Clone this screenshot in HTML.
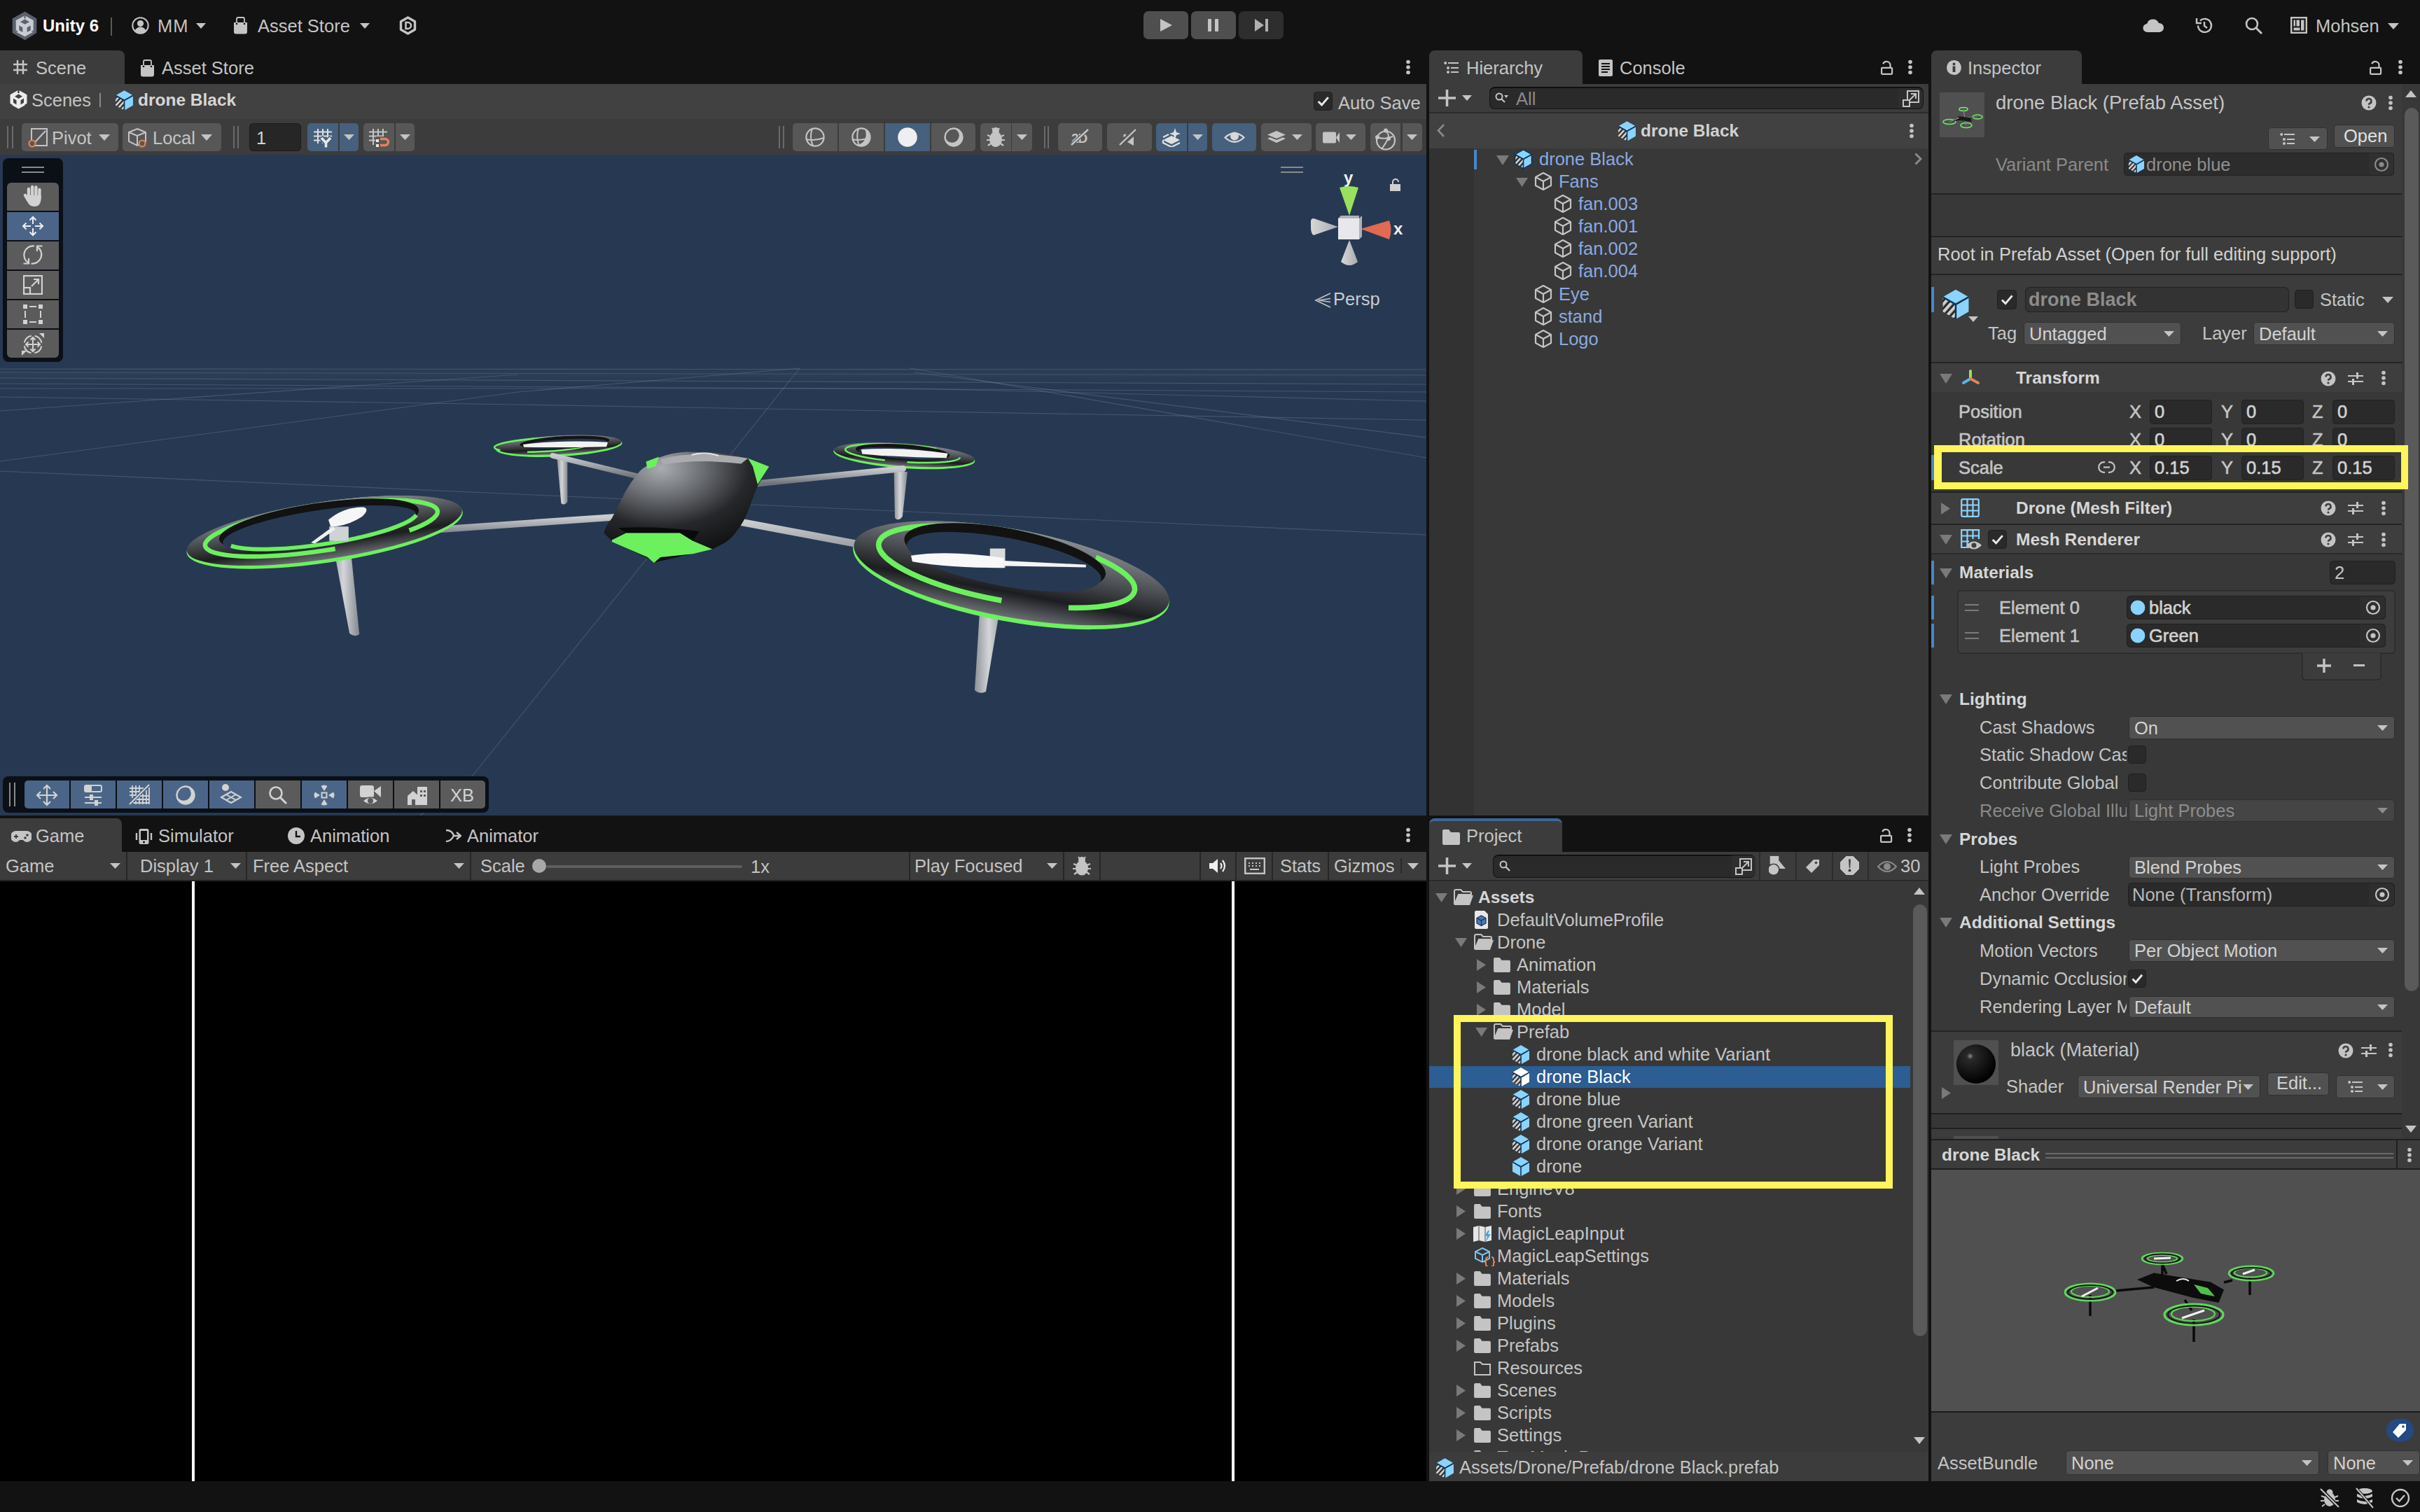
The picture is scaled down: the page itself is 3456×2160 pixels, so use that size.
<!DOCTYPE html><html><head><meta charset="utf-8"><style>
html,body{margin:0;padding:0;width:3456px;height:2160px;overflow:hidden;background:#121212;}
body{position:relative;font-family:"Liberation Sans",sans-serif;}
div,svg{position:absolute;box-sizing:border-box;}
.t{white-space:nowrap;line-height:40px;height:40px;}
</style></head><body>
<div style="left:0px;top:0px;width:3456px;height:72px;background:#121212;"></div>
<div style="left:0px;top:72px;width:178px;height:48px;background:#3c3c3c;border-radius:0 8px 0 0;"></div>
<div style="left:0px;top:120px;width:2037px;height:50px;background:#414141;"></div>
<div style="left:0px;top:170px;width:2037px;height:51px;background:#3c3c3c;"></div>
<div style="left:0px;top:213px;width:2037px;height:3px;background:#3e3a3e;"></div>
<div style="left:0px;top:221px;width:2037px;height:944px;background:#273952;"></div>
<div style="left:0px;top:1169px;width:174px;height:48px;background:#3c3c3c;border-radius:0 8px 0 0;"></div>
<div style="left:0px;top:1217px;width:2037px;height:40px;background:#3c3c3c;"></div>
<div style="left:0px;top:1257px;width:2037px;height:2px;background:#232323;"></div>
<div style="left:0px;top:1259px;width:2037px;height:857px;background:#000;"></div>
<div style="left:274px;top:1259px;width:4px;height:857px;background:#fff;"></div>
<div style="left:1759px;top:1259px;width:4px;height:857px;background:#fff;"></div>
<div style="left:2041px;top:72px;width:219px;height:48px;background:#3c3c3c;border-radius:8px 8px 0 0;"></div>
<div style="left:2041px;top:120px;width:713px;height:40px;background:#3c3c3c;"></div>
<div style="left:2041px;top:160px;width:713px;height:2px;background:#2a2a2a;"></div>
<div style="left:2041px;top:162px;width:713px;height:50px;background:#414141;"></div>
<div style="left:2041px;top:212px;width:713px;height:953px;background:#383838;"></div>
<div style="left:2041px;top:212px;width:64px;height:953px;background:#323232;"></div>
<div style="left:2041px;top:1169px;width:190px;height:48px;background:#3c3c3c;border-radius:8px 8px 0 0;border-top:4px solid #3d6696;"></div>
<div style="left:2041px;top:1217px;width:713px;height:40px;background:#3c3c3c;"></div>
<div style="left:2041px;top:1257px;width:713px;height:2px;background:#2a2a2a;"></div>
<div style="left:2041px;top:1259px;width:713px;height:815px;background:#383838;"></div>
<div style="left:2041px;top:2074px;width:713px;height:42px;background:#3c3c3c;"></div>
<div style="left:2758px;top:72px;width:215px;height:48px;background:#3c3c3c;border-radius:8px 8px 0 0;"></div>
<div style="left:2758px;top:120px;width:698px;height:1509px;background:#3c3c3c;"></div>
<div style="left:2758px;top:1629px;width:698px;height:42px;background:#3c3c3c;"></div>
<div style="left:2758px;top:1671px;width:698px;height:345px;background:#505050;"></div>
<div style="left:2758px;top:2016px;width:698px;height:2px;background:#1a1a1a;"></div>
<div style="left:2758px;top:2018px;width:698px;height:98px;background:#3c3c3c;"></div>
<div style="left:3430px;top:120px;width:26px;height:1509px;background:#383838;"></div>
<svg style="left:3435px;top:129px;" width="16" height="10" viewBox="0 0 16 10"><path d="M0 10H16L8 0Z" fill="#c4c4c4"/></svg>
<div style="left:3434px;top:154px;width:20px;height:1262px;background:#5a5a5a;border-radius:10px;"></div>
<svg style="left:3435px;top:1608px;" width="16" height="10" viewBox="0 0 16 10"><path d="M0 0H16L8 10Z" fill="#c4c4c4"/></svg>
<svg style="left:17px;top:16px;" width="36" height="42" viewBox="0 0 36 42"><path d="M18.5 0.4L35.3 10.5V31L18.5 41.3L0.7 31V10.5Z" fill="#5a616d"/>
<path d="M18.5 6.3L30.7 13V29.5L18.5 36.3L5.7 29.5V13Z" fill="#c9ccd2"/>
<path d="M18.5 11.5L25 15.2L18.5 18.8L12 15.2Z" fill="#5a616d"/>
<path d="M10.3 20.4L15.3 23.2V30L10.3 27.2Z" fill="#5a616d"/>
<path d="M26.7 20.4L21.7 23.2V30L26.7 27.2Z" fill="#5a616d"/>
<path d="M17.5 6.3H19.5V10.5H17.5Z M5.7 27L9 29L5.7 30Z M30.7 27L27.5 29L30.7 30Z" fill="#5a616d"/></svg>
<div class="t" style="left:61px;top:17px;font-size:24px;color:#ffffff;font-weight:bold;">Unity 6</div>
<div style="left:158px;top:25px;width:2px;height:26px;background:#5a5a5a;"></div>
<svg style="left:188px;top:24px;" width="25" height="25" viewBox="0 0 25 25"><circle cx="12.5" cy="12.5" r="11.2" stroke="#c4c4c4" stroke-width="2" fill="none"/><circle cx="12.5" cy="9.5" r="4.6" fill="#c4c4c4"/><path d="M4.5 20Q7 14.5 12.5 14.5Q18 14.5 20.5 20Q17 23.5 12.5 23.5Q8 23.5 4.5 20Z" fill="#c4c4c4"/></svg>
<div class="t" style="left:225px;top:17px;font-size:25.5px;color:#c4c4c4;letter-spacing:1px;">MM</div>
<svg style="left:280px;top:33px;" width="14" height="8" viewBox="0 0 14 8"><path d="M0 0H14L7.0 8Z" fill="#c4c4c4"/></svg>
<svg style="left:333px;top:24px;" width="21" height="25" viewBox="0 0 21 25"><path d="M5 9V3Q5 1 7 1H14Q16 1 16 3V9" stroke="#c4c4c4" stroke-width="1.8" fill="none"/><path d="M1 8.5Q1 8 1.5 8H19.5Q20 8 20 8.5V21.5Q20 24.5 17 24.5H4Q1 24.5 1 21.5Z" fill="#c4c4c4"/><circle cx="5" cy="10" r="1.3" fill="#121212"/><circle cx="16" cy="10" r="1.3" fill="#121212"/></svg>
<div class="t" style="left:368px;top:17px;font-size:25.5px;color:#c4c4c4;">Asset Store</div>
<svg style="left:514px;top:33px;" width="14" height="8" viewBox="0 0 14 8"><path d="M0 0H14L7.0 8Z" fill="#c4c4c4"/></svg>
<svg style="left:570px;top:23px;" width="25" height="27" viewBox="0 0 25 27"><path d="M12.5 2L22.5 7.8V19.2L12.5 25L2.5 19.2V7.8Z" stroke="#c4c4c4" stroke-width="3.4" fill="none" stroke-linejoin="round"/><path d="M9.5 9H12.5A4.5 4.5 0 0 1 12.5 18H9.5Z" stroke="#c4c4c4" stroke-width="2.6" fill="none"/></svg>
<div style="left:1633px;top:16px;width:64px;height:40px;background:#4f4f4f;border-radius:7px;"></div>
<div style="left:1701px;top:16px;width:64px;height:40px;background:#4f4f4f;border-radius:7px;"></div>
<div style="left:1769px;top:16px;width:64px;height:40px;background:#2e2e2e;border-radius:7px;"></div>
<svg style="left:1656px;top:26px;" width="19" height="20" viewBox="0 0 19 20"><path d="M1 1V19L18 10Z" fill="#c4c4c4"/></svg>
<svg style="left:1725px;top:26px;" width="16" height="20" viewBox="0 0 16 20"><rect x="0" y="1" width="5" height="18" rx="1" fill="#c4c4c4"/><rect x="10" y="1" width="5" height="18" rx="1" fill="#c4c4c4"/></svg>
<svg style="left:1791px;top:26px;" width="22" height="20" viewBox="0 0 22 20"><path d="M1 1V19L14 10Z" fill="#b0b0b0"/><rect x="16" y="1" width="4" height="18" fill="#b0b0b0"/></svg>
<svg style="left:3060px;top:25px;" width="30" height="22" viewBox="0 0 30 22"><path d="M7 21A6 6 0 0 1 6 9A9 9 0 0 1 23 8A6.5 6.5 0 0 1 24 21Z" fill="#c4c4c4"/></svg>
<svg style="left:3134px;top:24px;" width="27" height="25" viewBox="0 0 27 25"><path d="M5 12.5A9.5 9.5 0 1 0 8 5.5" stroke="#c4c4c4" stroke-width="2.4" fill="none"/><path d="M3 2V9H10" stroke="#c4c4c4" stroke-width="2.4" fill="none"/><path d="M14 7V13L18 16" stroke="#c4c4c4" stroke-width="2.4" fill="none"/></svg>
<svg style="left:3206px;top:24px;" width="26" height="26" viewBox="0 0 26 26"><circle cx="10" cy="10" r="8" stroke="#c4c4c4" stroke-width="2.6" fill="none"/><path d="M16 16L24 24" stroke="#c4c4c4" stroke-width="3"/></svg>
<svg style="left:3271px;top:24px;" width="24" height="24" viewBox="0 0 24 24"><rect x="1.2" y="1.2" width="21.6" height="21.6" stroke="#c4c4c4" stroke-width="2.4" fill="none"/><rect x="4.5" y="4.5" width="2.5" height="9" fill="#c4c4c4"/><rect x="8.5" y="4.5" width="4.5" height="9" fill="#c4c4c4"/><rect x="15" y="4.5" width="4.5" height="15" fill="#c4c4c4"/><rect x="4.5" y="15.5" width="9" height="4" fill="#c4c4c4"/></svg>
<div class="t" style="left:3307px;top:17px;font-size:25.5px;color:#c4c4c4;">Mohsen</div>
<svg style="left:3410px;top:33px;" width="16" height="9" viewBox="0 0 16 9"><path d="M0 0H16L8.0 9Z" fill="#c4c4c4"/></svg>
<svg style="left:18px;top:85px;" width="22" height="22" viewBox="0 0 22 22"><path d="M7 1V21M15 1V21M1 7H21M1 15H21" stroke="#c4c4c4" stroke-width="2.4"/></svg>
<div class="t" style="left:51px;top:77px;font-size:25.5px;color:#c4c4c4;">Scene</div>
<svg style="left:200px;top:85px;" width="21" height="25" viewBox="0 0 21 25"><path d="M5 9V3Q5 1 7 1H14Q16 1 16 3V9" stroke="#c4c4c4" stroke-width="1.8" fill="none"/><path d="M1 8.5Q1 8 1.5 8H19.5Q20 8 20 8.5V21.5Q20 24.5 17 24.5H4Q1 24.5 1 21.5Z" fill="#c4c4c4"/><circle cx="5" cy="10" r="1.3" fill="#121212"/><circle cx="16" cy="10" r="1.3" fill="#121212"/></svg>
<div class="t" style="left:231px;top:77px;font-size:25.5px;color:#c4c4c4;">Asset Store</div>
<svg style="left:2007px;top:84px;" width="8" height="24" viewBox="0 0 8 24"><circle cx="4" cy="4.5" r="2.8" fill="#c4c4c4"/><circle cx="4" cy="12" r="2.8" fill="#c4c4c4"/><circle cx="4" cy="19.5" r="2.8" fill="#c4c4c4"/></svg>
<svg style="left:14px;top:128px;" width="25" height="28" viewBox="0 0 25 28"><path d="M12.5 0.5L24.5 7.2V20.8L12.5 27.5L0.5 20.8V7.2Z" fill="#ececec"/>
<path d="M12.5 6.5L18 9.8L12.5 13L7 9.8Z" fill="#414141"/>
<path d="M5 12.5L9.5 15.2V21.5L5 18.8Z" fill="#414141"/>
<path d="M20 12.5L15.5 15.2V21.5L20 18.8Z" fill="#414141"/>
<path d="M11.3 0V5H13.7V0Z M0 19.5L4.2 22L0 23Z M25 19.5L20.8 22L25 23Z" fill="#414141"/></svg>
<div class="t" style="left:45px;top:123px;font-size:25.5px;color:#c4c4c4;">Scenes</div>
<div style="left:142px;top:133px;width:2px;height:20px;background:#8a8a8a;"></div>
<svg style="left:164px;top:128px;" width="27" height="29.7" viewBox="0 0 26 26" preserveAspectRatio="none"><defs><pattern id="st164_129" width="4.6" height="6" patternUnits="userSpaceOnUse" patternTransform="rotate(45)"><rect width="2.7" height="6" fill="#d0d0d0"/><rect x="2.7" width="1.9" height="6" fill="#2a2a2a"/></pattern></defs>
<path d="M13 1L25 7.3L13 13.5L1 7.3Z" fill="#8ad3ff"/><path d="M25 7.3V19.7L13 26V13.5Z" fill="#8ad3ff"/><path d="M1 7.3L13 13.5V26L1 19.7Z" fill="url(#st164_129)"/><path d="M13 13.5V26M1 7.3L13 13.5L25 7.3" stroke="#0d3556" stroke-width="1.6" fill="none" stroke-linejoin="round"/></svg>
<div class="t" style="left:197px;top:123px;font-size:24.5px;color:#d6d6d6;font-weight:bold;">drone Black</div>
<svg style="left:1876px;top:131px;" width="27" height="27" viewBox="0 0 27 27"><rect x="0.5" y="0.5" width="26" height="26" rx="4" fill="#2a2a2a" stroke="#1f1f1f"/><path d="M6.75 14.040000000000001L11.61 18.9L20.79 8.1" stroke="#e8e8e8" stroke-width="3" fill="none"/></svg>
<div class="t" style="left:1911px;top:127px;font-size:25.5px;color:#c4c4c4;">Auto Save</div>
<div style="left:10px;top:180px;width:2px;height:32px;background:#6a6a6a;"></div>
<div style="left:17px;top:180px;width:2px;height:32px;background:#6a6a6a;"></div>
<div style="left:31px;top:176px;width:138px;height:40px;background:#575757;border-radius:5px;"></div>
<svg style="left:39px;top:182px;" width="30" height="30" viewBox="0 0 30 30"><rect x="6" y="2" width="22" height="24" stroke="#c4c4c4" stroke-width="2" fill="none"/><path d="M11 21L26 5" stroke="#c4c4c4" stroke-width="2"/><circle cx="7" cy="23" r="4.5" fill="#575757" stroke="#e8805a" stroke-width="2.2"/></svg>
<div class="t" style="left:74px;top:177px;font-size:25.5px;color:#c4c4c4;">Pivot</div>
<svg style="left:141px;top:192px;" width="16" height="9" viewBox="0 0 16 9"><path d="M0 0H16L8.0 9Z" fill="#c4c4c4"/></svg>
<div style="left:175px;top:176px;width:141px;height:40px;background:#575757;border-radius:5px;"></div>
<svg style="left:182px;top:182px;" width="30" height="30" viewBox="0 0 30 30"><path d="M14 2L26 7V20L14 26L2 20V7Z M2 7L14 12L26 7 M14 12V26" stroke="#c4c4c4" stroke-width="2" fill="none"/><circle cx="21" cy="23" r="4.5" fill="#575757" stroke="#e8805a" stroke-width="2.2"/></svg>
<div class="t" style="left:218px;top:177px;font-size:25.5px;color:#c4c4c4;">Local</div>
<svg style="left:287px;top:192px;" width="16" height="9" viewBox="0 0 16 9"><path d="M0 0H16L8.0 9Z" fill="#c4c4c4"/></svg>
<div style="left:333px;top:180px;width:2px;height:32px;background:#6a6a6a;"></div>
<div style="left:339px;top:180px;width:2px;height:32px;background:#6a6a6a;"></div>
<div style="left:356px;top:176px;width:74px;height:40px;background:#262626;border-radius:6px;box-shadow:inset 0 0 0 1px #1c1c1c;"></div>
<div class="t" style="left:366px;top:177px;font-size:25.5px;color:#d2d2d2;">1</div>
<div style="left:439px;top:176px;width:44px;height:40px;background:#46607e;border-radius:5px 0 0 5px;"></div>
<div style="left:485px;top:176px;width:27px;height:40px;background:#46607e;border-radius:0 5px 5px 0;"></div>
<svg style="left:447px;top:183px;" width="30" height="28" viewBox="0 0 30 28"><path d="M7 1V22M14 1V22M21 1V14M1 5.5H27M1 11.5H27M1 17.5H12" stroke="#e0e0e0" stroke-width="2"/><path d="M11 13L18.5 21L26 13M18.5 21V28" stroke="#46607e" stroke-width="7" fill="none"/><path d="M12 14L18.5 21L25 14M18.5 21V27.5" stroke="#e8e8e8" stroke-width="3.6" fill="none"/></svg>
<svg style="left:491px;top:192px;" width="15" height="8" viewBox="0 0 15 8"><path d="M0 0H15L7.5 8Z" fill="#c4c4c4"/></svg>
<div style="left:519px;top:176px;width:44px;height:40px;background:#575757;border-radius:5px 0 0 5px;"></div>
<div style="left:565px;top:176px;width:27px;height:40px;background:#575757;border-radius:0 5px 5px 0;"></div>
<svg style="left:526px;top:183px;" width="32" height="28" viewBox="0 0 32 28"><path d="M7 1V24M14 1V17M21 1V12M1 5.5H27M1 11.5H20M1 17.5H10" stroke="#c4c4c4" stroke-width="2"/><rect x="11" y="12" width="20" height="16" fill="#575757"/><path d="M17 15.5H24A4.5 4.5 0 0 1 24 24.5H17" stroke="#e8805a" stroke-width="3.4" fill="none"/><rect x="11" y="16" width="4" height="4" fill="#e8e8e8"/><rect x="11" y="23" width="4" height="4" fill="#e8e8e8"/></svg>
<svg style="left:571px;top:192px;" width="15" height="8" viewBox="0 0 15 8"><path d="M0 0H15L7.5 8Z" fill="#c4c4c4"/></svg>
<div style="left:1112px;top:180px;width:2px;height:32px;background:#6a6a6a;"></div>
<div style="left:1118px;top:180px;width:2px;height:32px;background:#6a6a6a;"></div>
<div style="left:1132px;top:176px;width:64px;height:40px;background:#575757;border-radius:5px 0 0 5px;"></div>
<div style="left:1198px;top:176px;width:64px;height:40px;background:#575757;border-radius:0;"></div>
<div style="left:1264px;top:176px;width:64px;height:40px;background:#46607e;border-radius:0;"></div>
<div style="left:1330px;top:176px;width:63px;height:40px;background:#575757;border-radius:0 5px 5px 0;"></div>
<svg style="left:1150px;top:182px;" width="28" height="28" viewBox="0 0 28 28"><circle cx="14" cy="14" r="12.6" stroke="#c4c4c4" stroke-width="2.2" fill="none"/><path d="M10 1.5Q5.5 14 11 26.5M1.5 17Q14 19.5 26.5 15" stroke="#c4c4c4" stroke-width="2" fill="none"/></svg>
<svg style="left:1216px;top:182px;" width="28" height="28" viewBox="0 0 28 28"><circle cx="14" cy="14" r="12.6" stroke="#c4c4c4" stroke-width="2.2" fill="none"/><path d="M10 1.5Q6 14 11 26.5M1.5 17Q10 19 20 16.5" stroke="#c4c4c4" stroke-width="2" fill="none"/><path d="M19 2.5A12.6 12.6 0 0 1 7 25Q17 24 20 15Q22 8 19 2.5Z" fill="#c4c4c4"/></svg>
<svg style="left:1281px;top:181px;" width="30" height="30" viewBox="0 0 30 30"><circle cx="15" cy="15" r="13.8" fill="#efefef"/></svg>
<svg style="left:1348px;top:182px;" width="28" height="28" viewBox="0 0 28 28"><circle cx="14" cy="14" r="13.4" fill="#c4c4c4"/><circle cx="11.6" cy="11.6" r="10.2" fill="#575757"/><circle cx="14" cy="14" r="12.3" stroke="#c4c4c4" stroke-width="2.2" fill="none"/></svg>
<div style="left:1400px;top:176px;width:44px;height:40px;background:#575757;border-radius:5px 0 0 5px;"></div>
<div style="left:1445px;top:176px;width:29px;height:40px;background:#575757;border-radius:0 5px 5px 0;"></div>
<svg style="left:1408px;top:181px;" width="28" height="30" viewBox="0 0 28 30"><ellipse cx="14" cy="18" rx="9" ry="11" fill="#c4c4c4"/><circle cx="14" cy="6" r="5" fill="#c4c4c4"/><path d="M2 12L7 14M26 12L21 14M1 19H6M27 19H22M3 27L7 24M25 27L21 24M9 2L11 5M19 2L17 5" stroke="#c4c4c4" stroke-width="2.2"/></svg>
<svg style="left:1452px;top:192px;" width="15" height="8" viewBox="0 0 15 8"><path d="M0 0H15L7.5 8Z" fill="#c4c4c4"/></svg>
<div style="left:1491px;top:180px;width:2px;height:32px;background:#6a6a6a;"></div>
<div style="left:1496px;top:180px;width:2px;height:32px;background:#6a6a6a;"></div>
<div style="left:1511px;top:176px;width:63px;height:40px;background:#575757;border-radius:5px;"></div>
<svg style="left:1528px;top:183px;" width="30" height="26" viewBox="0 0 30 26"><text x="2" y="20.5" font-family="Liberation Sans" font-weight="bold" font-size="19" fill="#c4c4c4" letter-spacing="-1">2D</text><path d="M2 24L26 2" stroke="#575757" stroke-width="5"/><path d="M2 24L26 2" stroke="#c4c4c4" stroke-width="2.4"/></svg>
<div style="left:1581px;top:176px;width:64px;height:40px;background:#575757;border-radius:5px;"></div>
<svg style="left:1598px;top:183px;" width="28" height="26" viewBox="0 0 28 26"><path d="M12 20L21 12V25Z" fill="#c4c4c4"/><path d="M6 12L10 9M7 9L9 12" stroke="#c4c4c4" stroke-width="1.6"/><path d="M1 24L24 2" stroke="#575757" stroke-width="5"/><path d="M1 24L24 2" stroke="#c4c4c4" stroke-width="2.4"/></svg>
<div style="left:1651px;top:176px;width:44px;height:40px;background:#46607e;border-radius:5px 0 0 5px;"></div>
<div style="left:1697px;top:176px;width:27px;height:40px;background:#46607e;border-radius:0 5px 5px 0;"></div>
<svg style="left:1659px;top:182px;" width="28" height="28" viewBox="0 0 28 28"><path d="M2 18L14 24L26 18L14 12Z" fill="#e0e0e0"/><path d="M2 14L10 10M2 18V22L14 28L26 22" stroke="#e0e0e0" stroke-width="2.2" fill="none"/><path d="M19 1L21 7L27 9L21 11L19 17L17 11L11 9L17 7Z" fill="#e0e0e0"/></svg>
<svg style="left:1703px;top:192px;" width="15" height="8" viewBox="0 0 15 8"><path d="M0 0H15L7.5 8Z" fill="#c4c4c4"/></svg>
<div style="left:1731px;top:176px;width:63px;height:40px;background:#46607e;border-radius:5px;"></div>
<svg style="left:1748px;top:187px;" width="30" height="18" viewBox="0 0 30 18"><path d="M1.5 9.5Q15 -3 28.5 9.5Q15 22 1.5 9.5Z" stroke="#d8d8d8" stroke-width="2.2" fill="none"/><circle cx="15" cy="7.5" r="6" fill="#d8d8d8"/></svg>
<div style="left:1801px;top:176px;width:72px;height:40px;background:#575757;border-radius:5px;"></div>
<svg style="left:1810px;top:187px;" width="26" height="18" viewBox="0 0 26 18"><path d="M13 0L26 5.5L13 11L0 5.5Z" fill="#c4c4c4"/><path d="M0 11L4 9.3L13 13L22 9.3L26 11L13 17Z" fill="#c4c4c4"/></svg>
<svg style="left:1845px;top:192px;" width="15" height="8" viewBox="0 0 15 8"><path d="M0 0H15L7.5 8Z" fill="#c4c4c4"/></svg>
<div style="left:1879px;top:176px;width:71px;height:40px;background:#575757;border-radius:5px;"></div>
<svg style="left:1889px;top:188px;" width="25" height="17" viewBox="0 0 25 17"><rect x="0" y="0.5" width="19" height="16" rx="2" fill="#c4c4c4"/><path d="M19 8.5L24 1V16Z" fill="#c4c4c4"/></svg>
<svg style="left:1922px;top:192px;" width="15" height="8" viewBox="0 0 15 8"><path d="M0 0H15L7.5 8Z" fill="#c4c4c4"/></svg>
<div style="left:1957px;top:176px;width:43px;height:40px;background:#575757;border-radius:5px 0 0 5px;"></div>
<div style="left:2003px;top:176px;width:28px;height:40px;background:#575757;border-radius:0 5px 5px 0;"></div>
<svg style="left:1963px;top:183px;" width="32" height="32" viewBox="0 0 32 32"><circle cx="16" cy="17.5" r="13" stroke="#c4c4c4" stroke-width="2.2" fill="none"/><path d="M16 3Q21 10 20 14M4 13Q12 16 20 14L26 12M20 14Q16 22 10 30" stroke="#c4c4c4" stroke-width="2" fill="none"/><circle cx="16" cy="3.5" r="3" fill="#c4c4c4"/><circle cx="4" cy="13" r="3" fill="#c4c4c4"/><circle cx="20" cy="15" r="3" fill="#c4c4c4"/></svg>
<svg style="left:2009px;top:192px;" width="15" height="8" viewBox="0 0 15 8"><path d="M0 0H15L7.5 8Z" fill="#c4c4c4"/></svg>
<svg style="left:0px;top:221px;" width="2037" height="944" viewBox="0 0 2037 944"><line x1="0" y1="438" x2="740" y2="339" stroke="#8593a8" stroke-opacity="0.32" stroke-width="1.1"/><line x1="740" y1="339" x2="1142" y2="305" stroke="#8593a8" stroke-opacity="0.32" stroke-width="1.1"/><line x1="0" y1="452" x2="740" y2="485" stroke="#8593a8" stroke-opacity="0.32" stroke-width="1.1"/><line x1="740" y1="485" x2="1300" y2="510" stroke="#8593a8" stroke-opacity="0.32" stroke-width="1.1"/><line x1="1300" y1="510" x2="2037" y2="543" stroke="#8593a8" stroke-opacity="0.32" stroke-width="1.1"/><line x1="0" y1="366" x2="740" y2="314" stroke="#8593a8" stroke-opacity="0.32" stroke-width="1.1"/><line x1="0" y1="346" x2="740" y2="357" stroke="#8593a8" stroke-opacity="0.32" stroke-width="1.1"/><line x1="740" y1="357" x2="2037" y2="379" stroke="#8593a8" stroke-opacity="0.32" stroke-width="1.1"/><line x1="0" y1="327" x2="2037" y2="339" stroke="#8593a8" stroke-opacity="0.32" stroke-width="1.1"/><line x1="0" y1="319" x2="2037" y2="328" stroke="#8593a8" stroke-opacity="0.32" stroke-width="1.1"/><line x1="0" y1="311" x2="2037" y2="315" stroke="#8593a8" stroke-opacity="0.32" stroke-width="1.1"/><line x1="0" y1="306" x2="2037" y2="307" stroke="#8593a8" stroke-opacity="0.32" stroke-width="1.1"/><line x1="0" y1="334" x2="1300" y2="334" stroke="#8593a8" stroke-opacity="0.32" stroke-width="1.1"/><line x1="1300" y1="334" x2="2037" y2="352" stroke="#8593a8" stroke-opacity="0.32" stroke-width="1.1"/><line x1="1300" y1="305" x2="2037" y2="433" stroke="#8593a8" stroke-opacity="0.32" stroke-width="1.1"/><line x1="675" y1="887" x2="1142" y2="305" stroke="#8593a8" stroke-opacity="0.32" stroke-width="1.1"/><line x1="600" y1="944" x2="675" y2="887" stroke="#8593a8" stroke-opacity="0.32" stroke-width="1.1"/><line x1="1305" y1="311" x2="2037" y2="404" stroke="#8593a8" stroke-opacity="0.32" stroke-width="1.1"/></svg>
<div style="left:0px;top:522px;width:2037px;height:26px;background:linear-gradient(#27395200,#3a4a6040,#27395200);"></div>
<svg style="left:200px;top:560px;" width="1550" height="460" viewBox="0 0 2420 718">
<defs>
<linearGradient id="tube" x1="0" y1="0" x2="0" y2="1"><stop offset="0" stop-color="#8a8e94"/><stop offset="0.4" stop-color="#4e5156"/><stop offset="0.72" stop-color="#1c1d20"/><stop offset="1" stop-color="#6a6d73"/></linearGradient>
<linearGradient id="bodyg" x1="0.2" y1="0" x2="0.5" y2="1"><stop offset="0" stop-color="#a8abb0"/><stop offset="0.22" stop-color="#5f6267"/><stop offset="0.5" stop-color="#2a2b2e"/><stop offset="1" stop-color="#0a0a0a"/></linearGradient>
<linearGradient id="leg" x1="0" y1="0" x2="1" y2="0"><stop offset="0" stop-color="#8d9197"/><stop offset="0.45" stop-color="#d3d5d9"/><stop offset="1" stop-color="#84888e"/></linearGradient>
<linearGradient id="arm" x1="0" y1="0" x2="0" y2="1"><stop offset="0" stop-color="#c9cbcf"/><stop offset="0.5" stop-color="#9da1a7"/><stop offset="1" stop-color="#6f7379"/></linearGradient>
</defs>
<!-- back rings -->
<g transform="rotate(-3 934 118)">
<ellipse cx="934" cy="121" rx="141" ry="23" fill="#6cf05e"/>
<ellipse cx="934" cy="118" rx="140" ry="21" fill="url(#tube)"/>
<ellipse cx="900" cy="116" rx="110" ry="15" fill="none" stroke="#6cf05e" stroke-width="4" stroke-dasharray="150 60 200 400"/>
<ellipse cx="947" cy="113" rx="100" ry="14" fill="#141414"/>
<ellipse cx="947" cy="116" rx="94" ry="10" fill="#273952"/>
</g>
<path d="M854 117Q940 106 1043 112L1040 122Q950 124 856 123Z" fill="#f2f2f2"/>
<g transform="rotate(4 1704 140)">
<ellipse cx="1704" cy="143" rx="158" ry="27" fill="#6cf05e"/>
<ellipse cx="1704" cy="140" rx="157" ry="25" fill="url(#tube)"/>
<ellipse cx="1700" cy="137" rx="128" ry="19" fill="none" stroke="#6cf05e" stroke-width="4" stroke-dasharray="120 50 300 600"/>
<ellipse cx="1700" cy="134" rx="105" ry="17" fill="#141414"/>
<ellipse cx="1700" cy="137" rx="98" ry="12" fill="#273952"/>
</g>
<path d="M1608 128Q1700 122 1801 137L1798 147Q1700 146 1610 138Z" fill="#f2f2f2"/>
<!-- back legs -->
<path d="M930 150L953 150L953 245Q946 254 939 248Z" fill="url(#leg)"/>
<path d="M1681 178L1711 178L1700 278Q1690 290 1683 280Z" fill="url(#leg)"/>
<!-- back arms -->
<path d="M920 142L1118 190" stroke="url(#arm)" stroke-width="12" stroke-linecap="round"/>
<path d="M1377 204L1701 171" stroke="url(#arm)" stroke-width="14" stroke-linecap="round"/>
<!-- front arms -->
<path d="M445 322L1060 279" stroke="url(#arm)" stroke-width="15" stroke-linecap="round"/>
<path d="M1339 290L1900 395" stroke="url(#arm)" stroke-width="16" stroke-linecap="round"/>
<!-- body -->
<defs><radialGradient id="bodyr" cx="0.35" cy="0.15" r="0.85"><stop offset="0" stop-color="#a9acb1"/><stop offset="0.3" stop-color="#6b6e73"/><stop offset="0.62" stop-color="#26272a"/><stop offset="1" stop-color="#0c0c0c"/></radialGradient></defs>
<path d="M1034 314Q1040 295 1052 281.6L1074 238.2Q1088 210 1102.5 191.2Q1115 172 1128 166Q1140 152 1153 147.8Q1185 135 1218 133.4L1283 135.2Q1330 140 1355 147.8L1402 166L1377 209.4Q1365 240 1355 267.2Q1345 292 1330 310.6Q1315 332 1297.7 339.4L1276 350.4L1149.6 379.3L1052 332.4Z" fill="url(#bodyr)"/>
<path d="M1052 330.3L1084.5 314.1L1203.8 314.1L1232.7 332.2L1276 350.4L1232.7 361.1L1160.4 368.3L1146 381L1131.5 368.3L1052 334Z" fill="#6cf05e"/>
<path d="M1066 303Q1150 298 1247 310.6L1232.7 332.2L1203.8 314.1L1084.5 314.1Z" fill="#0a0a0a"/>
<path d="M1128 155.2L1157 144.3L1149.6 166L1131.5 171.4Z" fill="#6cf05e"/>
<path d="M1355.5 147.8L1402.5 166L1377.1 205.8L1366.3 166Z" fill="#6cf05e"/>
<path d="M1160 150Q1240 128 1355.5 147.8L1340 160Q1250 148 1165 162Z" fill="#a9abae"/>
<path d="M1230 140Q1260 132 1290 142" stroke="#e8e8e8" stroke-width="3" fill="none"/>
<!-- left front ring -->
<path d="M424 306L465 306L489 540Q478 548 467 538Z" fill="url(#leg)"/>
<g transform="rotate(-8.5 411 309)">
<ellipse cx="411" cy="313" rx="311" ry="68" fill="#6cf05e"/>
<ellipse cx="411" cy="309" rx="310" ry="64" fill="url(#tube)"/>
<ellipse cx="405" cy="303" rx="262" ry="50" fill="none" stroke="#6cf05e" stroke-width="10" stroke-dasharray="80 170 520 90 700 2000"/>
<ellipse cx="401" cy="294" rx="225" ry="48" fill="#121212"/>
<ellipse cx="401" cy="303" rx="218" ry="41" fill="#273952"/>
<path d="M200 312A218 41 0 0 0 619 305" stroke="#6cf05e" stroke-width="9" fill="none"/>
</g>
<path d="M422 300L465 300L465 332L422 332Z" fill="#d0d2d6"/>
<path d="M420 285Q455 255 500 257Q512 262 495 278Q460 300 425 300Z" fill="#f6f6f6"/>
<path d="M381 336L430 300L436 306L390 338Z" fill="#f0f0f0"/>
<!-- right front ring -->
<path d="M1878 395L1932 395L1886 668Q1872 675 1861 665Z" fill="url(#leg)"/>
<g transform="rotate(10.5 1943 404)">
<ellipse cx="1943" cy="409" rx="358" ry="103" fill="#6cf05e"/>
<ellipse cx="1943" cy="404" rx="357" ry="98" fill="url(#tube)"/>
<ellipse cx="1930" cy="392" rx="290" ry="76" fill="none" stroke="#6cf05e" stroke-width="12" stroke-dasharray="160 150 700 120 900 3000"/>
<ellipse cx="1922" cy="370" rx="228" ry="63" fill="#121212"/>
<ellipse cx="1922" cy="382" rx="220" ry="54" fill="#273952"/>
</g>
<path d="M1895 349L1929 349L1929 392L1895 392Z" fill="#d8dade"/>
<path d="M1719 365Q1800 352 1926 370L1926 392Q1800 392 1722 378Z" fill="#f8f8f8"/>
<path d="M1926 376L2109 385L2109 391L1926 388Z" fill="#f4f4f4"/>
</svg>
<div style="left:4px;top:226px;width:86px;height:291px;background:#0b0f16;border-radius:8px;"></div>
<div style="left:31px;top:238px;width:32px;height:2px;background:#8a8a8a;"></div>
<div style="left:31px;top:245px;width:32px;height:2px;background:#8a8a8a;"></div>
<div style="left:10px;top:261px;width:74px;height:40px;background:#5b5b5b;border-radius:6px 6px 0 0;"></div>
<div style="left:10px;top:303px;width:74px;height:40px;background:#4b6588;border-radius:0;"></div>
<div style="left:10px;top:345px;width:74px;height:40px;background:#5b5b5b;border-radius:0;"></div>
<div style="left:10px;top:387px;width:74px;height:40px;background:#5b5b5b;border-radius:0;"></div>
<div style="left:10px;top:429px;width:74px;height:40px;background:#5b5b5b;border-radius:0;"></div>
<div style="left:10px;top:471px;width:74px;height:40px;background:#5b5b5b;border-radius:0 0 6px 6px;"></div>
<svg style="left:33px;top:264px;" width="28" height="32" viewBox="0 0 28 32"><path d="M8 6V17M13.2 3V16M18.4 3.5V16M23.4 7V18M3 15L7 22" stroke="#d2d2d2" stroke-width="4.4" stroke-linecap="round"/><path d="M5.8 15H25.6V21Q25 31 15.5 31Q9 31 6 24Z" fill="#d2d2d2"/></svg>
<svg style="left:30px;top:307px;" width="34" height="32" viewBox="0 0 34 32"><path d="M17 3V29M3 16H31M12.5 7.5L17 3L21.5 7.5M12.5 24.5L17 29L21.5 24.5M7.5 11.5L3 16L7.5 20.5M26.5 11.5L31 16L26.5 20.5" stroke="#eeeeee" stroke-width="2" fill="none"/><rect x="14" y="13" width="6" height="6" fill="#4b6588"/></svg>
<svg style="left:32px;top:349px;" width="30" height="30" viewBox="0 0 30 30"><path d="M17 2.5A13 13 0 0 0 8.5 26.5M21 3.5A13 13 0 0 1 12.5 27.5" stroke="#d2d2d2" stroke-width="2.2" fill="none"/><path d="M1.5 27.5H9V20M28.5 2.5H21V10" stroke="#d2d2d2" stroke-width="2.2" fill="none"/></svg>
<svg style="left:33px;top:393px;" width="28" height="28" viewBox="0 0 28 28"><rect x="1" y="1" width="26" height="26" stroke="#d2d2d2" stroke-width="2.2" fill="none"/><rect x="1" y="18" width="9" height="9" stroke="#d2d2d2" stroke-width="2.2" fill="none"/><path d="M12 16L22 6M15 6H22V13" stroke="#d2d2d2" stroke-width="2.2" fill="none"/></svg>
<svg style="left:33px;top:435px;" width="28" height="28" viewBox="0 0 28 28"><rect x="0" y="0" width="6" height="6" fill="#d2d2d2"/><rect x="22" y="0" width="6" height="6" fill="#d2d2d2"/><rect x="0" y="22" width="6" height="6" fill="#d2d2d2"/><rect x="22" y="22" width="6" height="6" fill="#d2d2d2"/><path d="M9 3H19M9 25H19M3 9V19M25 9V19" stroke="#d2d2d2" stroke-width="2"/></svg>
<svg style="left:31px;top:476px;" width="32" height="32" viewBox="0 0 32 32"><circle cx="16" cy="16" r="12.5" stroke="#d2d2d2" stroke-width="2" fill="none" stroke-dasharray="14.6 5" stroke-dashoffset="-2.5"/><path d="M16 6V26M6 16H26M12.5 9.5L16 6L19.5 9.5M12.5 22.5L16 26L19.5 22.5M9.5 12.5L6 16L9.5 19.5M22.5 12.5L26 16L22.5 19.5" stroke="#d2d2d2" stroke-width="2" fill="none"/><path d="M25 0H32V7Z M0 32V25H7Z" fill="#d2d2d2"/></svg>
<div style="left:1829px;top:238px;width:32px;height:2px;background:#8a8a8a;"></div>
<div style="left:1829px;top:245px;width:32px;height:2px;background:#8a8a8a;"></div>
<div class="t" style="left:1919px;top:234px;font-size:24px;color:#f0f0f0;font-weight:bold;">y</div>
<svg style="left:1872px;top:262px;" width="140" height="125" viewBox="0 0 140 125">
<defs><linearGradient id="gc" x1="0" x2="1"><stop offset="0" stop-color="#d8d8d8"/><stop offset="1" stop-color="#a8aaae"/></linearGradient></defs>
<path d="M41 6Q54 2 68 6L55 46Z" fill="#9be05c"/>
<path d="M0 62Q-2 50 4 50L39 62L4 74Q0 72 0 62Z" fill="url(#gc)"/>
<path d="M71 65L112 53Q117 66 112 80Z" fill="#e06a52"/>
<rect x="39" y="50" width="30" height="30" fill="#e8e8ec"/><path d="M39 50L43 46H69V50Z M69 50L73 46V76L69 80Z" fill="#b0b2b6"/>
<path d="M55 81L43 112Q55 122 67 112Z" fill="url(#gc)"/>
</svg>
<div class="t" style="left:1990px;top:307px;font-size:24px;color:#f0f0f0;font-weight:bold;">x</div>
<svg style="left:1985px;top:255px;" width="15" height="18" viewBox="0 0 15 18"><path d="M4 8V5A4 4 0 0 1 12 5" stroke="#d0d0d0" stroke-width="2" fill="none"/><rect x="0" y="8" width="15" height="10" fill="#d0d0d0"/></svg>
<svg style="left:1877px;top:417px;" width="26" height="24" viewBox="0 0 26 24"><path d="M23 2L2 12L23 22M23 9.5L6 12L23 14.5" stroke="#c4c4c4" stroke-width="1.6" fill="none"/></svg>
<div class="t" style="left:1904px;top:407px;font-size:25.5px;color:#c9ccd2;">Persp</div>
<div style="left:4px;top:1109px;width:694px;height:52px;background:#0b0f16;border-radius:8px;"></div>
<div style="left:13px;top:1118px;width:2px;height:34px;background:#8a8a8a;"></div>
<div style="left:20px;top:1118px;width:2px;height:34px;background:#8a8a8a;"></div>
<div style="left:35px;top:1115px;width:64px;height:40px;background:#4b6588;border-radius:5px 0 0 5px;"></div>
<div style="left:101px;top:1115px;width:64px;height:40px;background:#4b6588;border-radius:0;"></div>
<div style="left:167px;top:1115px;width:64px;height:40px;background:#4b6588;border-radius:0;"></div>
<div style="left:233px;top:1115px;width:64px;height:40px;background:#4b6588;border-radius:0;"></div>
<div style="left:299px;top:1115px;width:64px;height:40px;background:#4b6588;border-radius:0;"></div>
<div style="left:365px;top:1115px;width:64px;height:40px;background:#5b5b5b;border-radius:0;"></div>
<div style="left:431px;top:1115px;width:64px;height:40px;background:#4b6588;border-radius:0;"></div>
<div style="left:497px;top:1115px;width:64px;height:40px;background:#5b5b5b;border-radius:0;"></div>
<div style="left:563px;top:1115px;width:64px;height:40px;background:#5b5b5b;border-radius:0;"></div>
<div style="left:629px;top:1115px;width:64px;height:40px;background:#5b5b5b;border-radius:0 5px 5px 0;"></div>
<svg style="left:51px;top:1120px;" width="32" height="32" viewBox="0 0 32 32"><path d="M16 2V30M2 16H30M11 7L16 2L21 7M11 25L16 30L21 25M7 11L2 16L7 21M25 11L30 16L25 21" stroke="#d2d2d2" stroke-width="2.2" fill="none"/></svg>
<svg style="left:120px;top:1121px;" width="26" height="30" viewBox="0 0 26 30"><rect x="1" y="1" width="24" height="9" rx="2" stroke="#d2d2d2" stroke-width="2" fill="none"/><rect x="1" y="1" width="10" height="9" rx="2" fill="#d2d2d2"/><path d="M1 18H25M1 26H25" stroke="#d2d2d2" stroke-width="2"/><rect x="8" y="14" width="5" height="8" fill="#d2d2d2"/><rect x="15" y="22" width="5" height="8" fill="#d2d2d2"/></svg>
<svg style="left:184px;top:1120px;" width="30" height="30" viewBox="0 0 30 30"><path d="M5 2V20M10 2V15M15 2V10M1 6H21M1 11H16M1 16H11" stroke="#d2d2d2" stroke-width="1.8"/><path d="M10 29V24M15 29V19M20 29V14M25 29V9M29 29V5M6 27H29M9 22H29M14 17H29" stroke="#d2d2d2" stroke-width="1.8"/><path d="M1 29L29 1" stroke="#4b6588" stroke-width="4"/><path d="M1 29L29 1" stroke="#d2d2d2" stroke-width="2"/></svg>
<svg style="left:250px;top:1121px;" width="30" height="30" viewBox="0 0 30 30"><circle cx="15" cy="15" r="13.5" fill="#d2d2d2"/><circle cx="12.4" cy="12.4" r="10.4" fill="#4b6588"/><circle cx="15" cy="15" r="12.4" stroke="#d2d2d2" stroke-width="2.2" fill="none"/></svg>
<svg style="left:314px;top:1119px;" width="32" height="32" viewBox="0 0 32 32"><circle cx="8" cy="6" r="5" fill="#d2d2d2"/><path d="M2 20L16 12L30 20L16 28Z" stroke="#d2d2d2" stroke-width="2.2" fill="none"/><path d="M9 16L23 24M23 16L9 24" stroke="#d2d2d2" stroke-width="2"/></svg>
<svg style="left:383px;top:1122px;" width="28" height="28" viewBox="0 0 28 28"><circle cx="11" cy="11" r="8.5" stroke="#d2d2d2" stroke-width="2.6" fill="none"/><path d="M17 17L26 26" stroke="#d2d2d2" stroke-width="3"/></svg>
<svg style="left:447px;top:1120px;" width="32" height="32" viewBox="0 0 32 32"><rect x="12.5" y="12.5" width="7" height="7" stroke="#d2d2d2" stroke-width="2" fill="none"/><path d="M16 10L11.5 3Q16 0 20.5 3Z M16 22L11.5 29Q16 32 20.5 29Z M10 16L3 11.5Q0 16 3 20.5Z M22 16L29 11.5Q32 16 29 20.5Z" fill="#d2d2d2"/></svg>
<svg style="left:512px;top:1120px;" width="34" height="32" viewBox="0 0 34 32"><rect x="2" y="2" width="20" height="17" rx="3" fill="#d2d2d2"/><path d="M22 10L32 3V19Z" fill="#d2d2d2"/><path d="M6 24Q17 14 28 24Q17 34 6 24Z" fill="#d2d2d2" stroke="#5b5b5b" stroke-width="1.5"/><circle cx="17" cy="24" r="4" fill="#5b5b5b"/></svg>
<svg style="left:580px;top:1121px;" width="32" height="30" viewBox="0 0 32 30"><path d="M2 29V16L10 9L18 16V29Z" fill="#d2d2d2"/><rect x="16" y="3" width="14" height="26" fill="#d2d2d2"/><rect x="20" y="8" width="3" height="3" fill="#5b5b5b"/><rect x="25" y="8" width="3" height="3" fill="#5b5b5b"/><rect x="20" y="14" width="3" height="3" fill="#5b5b5b"/><rect x="25" y="14" width="3" height="3" fill="#5b5b5b"/><rect x="8" y="21" width="5" height="8" fill="#5b5b5b"/></svg>
<div class="t" style="left:643px;top:1116px;font-size:25.5px;color:#d2d2d2;">XB</div>
<svg style="left:16px;top:1187px;" width="29" height="16" viewBox="0 0 29 16"><path d="M7 0H22A7.5 7.5 0 0 1 22 16Q19 16 17 13H12Q10 16 7 16A7.5 7.5 0 0 1 7 0Z" fill="#c4c4c4"/><path d="M4 8H10M7 5V11" stroke="#3c3c3c" stroke-width="1.8"/><circle cx="20" cy="10" r="1.8" fill="#3c3c3c"/><circle cx="23" cy="6" r="1.8" fill="#3c3c3c"/></svg>
<div class="t" style="left:51px;top:1174px;font-size:25.5px;color:#c4c4c4;">Game</div>
<svg style="left:193px;top:1183px;" width="25" height="24" viewBox="0 0 25 24"><rect x="5.5" y="1" width="14" height="22" rx="2.5" fill="#c4c4c4"/><rect x="8" y="4" width="9" height="13" fill="#121212"/><circle cx="12.5" cy="20" r="1.5" fill="#121212"/><path d="M2 7V17M23 7V17" stroke="#c4c4c4" stroke-width="2.4"/></svg>
<div class="t" style="left:226px;top:1174px;font-size:25.5px;color:#c4c4c4;">Simulator</div>
<svg style="left:411px;top:1182px;" width="24" height="24" viewBox="0 0 24 24"><circle cx="12" cy="12" r="12" fill="#c4c4c4"/><path d="M12 5V13H18" stroke="#121212" stroke-width="2.4" fill="none"/></svg>
<div class="t" style="left:443px;top:1174px;font-size:25.5px;color:#c4c4c4;">Animation</div>
<svg style="left:636px;top:1184px;" width="23" height="20" viewBox="0 0 23 20"><path d="M1 2Q10 2 12 10H22M16 5L22 10L16 15M1 18Q8 18 12 10" stroke="#c4c4c4" stroke-width="2.4" fill="none"/></svg>
<div class="t" style="left:667px;top:1174px;font-size:25.5px;color:#c4c4c4;">Animator</div>
<svg style="left:2007px;top:1181px;" width="8" height="24" viewBox="0 0 8 24"><circle cx="4" cy="4.5" r="2.8" fill="#c4c4c4"/><circle cx="4" cy="12" r="2.8" fill="#c4c4c4"/><circle cx="4" cy="19.5" r="2.8" fill="#c4c4c4"/></svg>
<div style="left:180px;top:1217px;width:2px;height:40px;background:#262626;"></div>
<div style="left:351px;top:1217px;width:2px;height:40px;background:#262626;"></div>
<div style="left:671px;top:1217px;width:2px;height:40px;background:#262626;"></div>
<div style="left:1298px;top:1217px;width:2px;height:40px;background:#262626;"></div>
<div style="left:1518px;top:1217px;width:2px;height:40px;background:#262626;"></div>
<div style="left:1570px;top:1217px;width:2px;height:40px;background:#262626;"></div>
<div style="left:1713px;top:1217px;width:2px;height:40px;background:#262626;"></div>
<div style="left:1764px;top:1217px;width:2px;height:40px;background:#262626;"></div>
<div style="left:1816px;top:1217px;width:2px;height:40px;background:#262626;"></div>
<div style="left:1896px;top:1217px;width:2px;height:40px;background:#262626;"></div>
<div class="t" style="left:8px;top:1217px;font-size:25.5px;color:#c4c4c4;">Game</div>
<svg style="left:157px;top:1233px;" width="15" height="8" viewBox="0 0 15 8"><path d="M0 0H15L7.5 8Z" fill="#c4c4c4"/></svg>
<div class="t" style="left:200px;top:1217px;font-size:25.5px;color:#c4c4c4;">Display 1</div>
<svg style="left:329px;top:1233px;" width="15" height="8" viewBox="0 0 15 8"><path d="M0 0H15L7.5 8Z" fill="#c4c4c4"/></svg>
<div class="t" style="left:361px;top:1217px;font-size:25.5px;color:#c4c4c4;">Free Aspect</div>
<svg style="left:648px;top:1233px;" width="15" height="8" viewBox="0 0 15 8"><path d="M0 0H15L7.5 8Z" fill="#c4c4c4"/></svg>
<div class="t" style="left:686px;top:1217px;font-size:25.5px;color:#c4c4c4;">Scale</div>
<div style="left:780px;top:1236px;width:280px;height:4px;background:#5e5e5e;border-radius:2px;"></div>
<svg style="left:760px;top:1227px;" width="20" height="20" viewBox="0 0 20 20"><circle cx="10" cy="10" r="10" fill="#a8a8a8"/></svg>
<div class="t" style="left:1072px;top:1218px;font-size:25.5px;color:#c4c4c4;">1x</div>
<div class="t" style="left:1306px;top:1217px;font-size:25.5px;color:#c4c4c4;">Play Focused</div>
<svg style="left:1495px;top:1233px;" width="15" height="8" viewBox="0 0 15 8"><path d="M0 0H15L7.5 8Z" fill="#c4c4c4"/></svg>
<svg style="left:1530px;top:1223px;" width="30" height="28" viewBox="0 0 30 28"><ellipse cx="15" cy="17" rx="9" ry="10.5" fill="#c4c4c4"/><circle cx="15" cy="6" r="5" fill="#c4c4c4"/><path d="M3 11L8 13M27 11L22 13M2 18H7M28 18H23M4 26L8 23M26 26L22 23M10 1L12 4M20 1L18 4" stroke="#c4c4c4" stroke-width="2.2"/></svg>
<svg style="left:1726px;top:1226px;" width="26" height="22" viewBox="0 0 26 22"><path d="M1 7H6L13 1V21L6 15H1Z" fill="#eeeeee"/><path d="M17 7Q20 11 17 15M20 3Q26 11 20 19" stroke="#eeeeee" stroke-width="2.2" fill="none"/></svg>
<svg style="left:1777px;top:1225px;" width="30" height="24" viewBox="0 0 30 24"><rect x="1.2" y="1.2" width="27.6" height="21.6" stroke="#c4c4c4" stroke-width="2.4" fill="none"/><path d="M6 8H8M11 8H13M16 8H18M21 8H23M6 12H8M11 12H13M16 12H18M21 12H23M8 17H21" stroke="#c4c4c4" stroke-width="2.2"/></svg>
<div class="t" style="left:1828px;top:1217px;font-size:25.5px;color:#c4c4c4;">Stats</div>
<div class="t" style="left:1905px;top:1217px;font-size:25.5px;color:#c4c4c4;">Gizmos</div>
<div style="left:2000px;top:1226px;width:2px;height:22px;background:#2a2a2a;"></div>
<svg style="left:2010px;top:1233px;" width="16" height="9" viewBox="0 0 16 9"><path d="M0 0H16L8.0 9Z" fill="#c4c4c4"/></svg>
<svg style="left:3312px;top:2125px;" width="30" height="30" viewBox="0 0 30 30"><ellipse cx="15" cy="17" rx="8" ry="10" fill="#c4c4c4"/><circle cx="15" cy="7" r="4.5" fill="#c4c4c4"/><path d="M3 12L8 14M27 12L22 14M2 19H7M28 19H23M4 27L8 24M26 27L22 24" stroke="#c4c4c4" stroke-width="2"/><path d="M2 2L28 28" stroke="#121212" stroke-width="5"/><path d="M2 2L28 28" stroke="#c4c4c4" stroke-width="2.2"/></svg>
<svg style="left:3364px;top:2125px;" width="26" height="30" viewBox="0 0 26 30"><ellipse cx="13" cy="5" rx="11" ry="4" fill="#c4c4c4"/><path d="M2 9Q13 15 24 9V13Q13 19 2 13Z M2 17Q13 23 24 17V21Q13 27 2 21Z" fill="#c4c4c4"/><path d="M1 1L25 29" stroke="#121212" stroke-width="4"/><path d="M1 1L25 29" stroke="#c4c4c4" stroke-width="2"/></svg>
<svg style="left:3414px;top:2126px;" width="28" height="28" viewBox="0 0 28 28"><circle cx="14" cy="14" r="12" stroke="#c4c4c4" stroke-width="2.4" fill="none"/><path d="M8 14L12.5 18.5L20 10" stroke="#c4c4c4" stroke-width="2.4" fill="none"/></svg>
<svg style="left:2062px;top:88px;" width="22" height="17" viewBox="0 0 22 17"><circle cx="2.2" cy="2" r="2" fill="#c4c4c4"/><circle cx="6" cy="9" r="2" fill="#c4c4c4"/><circle cx="6" cy="15" r="2" fill="#c4c4c4"/><path d="M6 2H21M10 9H21M10 15H21" stroke="#c4c4c4" stroke-width="2.2"/></svg>
<div class="t" style="left:2094px;top:77px;font-size:25.5px;color:#c4c4c4;">Hierarchy</div>
<svg style="left:2283px;top:85px;" width="20" height="24" viewBox="0 0 20 24"><rect x="0" y="0" width="20" height="24" rx="2" fill="#c4c4c4"/><path d="M4 6H16M4 10H16M4 14H16M4 18H13" stroke="#121212" stroke-width="2"/></svg>
<div class="t" style="left:2313px;top:77px;font-size:25.5px;color:#c4c4c4;">Console</div>
<svg style="left:2686px;top:86px;" width="18" height="22" viewBox="0 0 18 22"><path d="M3.2 5.2A5.4 5.4 0 0 1 13.5 6.5V11" stroke="#c4c4c4" stroke-width="2.2" fill="none"/><rect x="1.1" y="10.8" width="15" height="9" rx="1" fill="none" stroke="#c4c4c4" stroke-width="2.2"/></svg>
<svg style="left:2724px;top:84px;" width="8" height="24" viewBox="0 0 8 24"><circle cx="4" cy="4.5" r="2.8" fill="#c4c4c4"/><circle cx="4" cy="12" r="2.8" fill="#c4c4c4"/><circle cx="4" cy="19.5" r="2.8" fill="#c4c4c4"/></svg>
<svg style="left:2054px;top:128px;" width="25" height="24" viewBox="0 0 25 24"><path d="M12.5 0V24M0 12H25" stroke="#c4c4c4" stroke-width="3.6"/></svg>
<svg style="left:2088px;top:136px;" width="14" height="8" viewBox="0 0 14 8"><path d="M0 0H14L7.0 8Z" fill="#c4c4c4"/></svg>
<div style="left:2127px;top:124px;width:620px;height:32px;background:#2a2a2a;border-radius:8px;box-shadow:inset 0 0 0 1px #141414;border-top:1.5px solid #0a0a0a;"></div>
<div style="left:2711px;top:126px;width:35px;height:29px;background:#2e2e2e;border-radius:0 7px 7px 0;"></div>
<svg style="left:2135px;top:132px;" width="20" height="18" viewBox="0 0 20 18"><circle cx="6" cy="6" r="4.5" stroke="#c4c4c4" stroke-width="2" fill="none"/><path d="M9 9L14 14" stroke="#c4c4c4" stroke-width="2.2"/><path d="M13 4H19L16 8Z" fill="#c4c4c4"/></svg>
<div class="t" style="left:2165px;top:121px;font-size:25.5px;color:#8a8a8a;">All</div>
<svg style="left:2717px;top:129px;" width="24" height="24" viewBox="0 0 24 24"><rect x="7" y="1" width="16" height="16" stroke="#c4c4c4" stroke-width="2" fill="none"/><rect x="1" y="14" width="9" height="9" stroke="#c4c4c4" stroke-width="2" fill="#2e2e2e"/><path d="M9 15L19 5M12 5H19V12" stroke="#c4c4c4" stroke-width="2" fill="none"/></svg>
<svg style="left:2051px;top:176px;" width="13" height="21" viewBox="0 0 13 21"><path d="M11 2L3 10.5L11 19" stroke="#8a8a8a" stroke-width="2.6" fill="none"/></svg>
<svg style="left:2310px;top:172px;" width="27" height="29.7" viewBox="0 0 26 26" preserveAspectRatio="none"><defs><pattern id="st2310_173" width="4.6" height="6" patternUnits="userSpaceOnUse" patternTransform="rotate(45)"><rect width="2.7" height="6" fill="#d0d0d0"/><rect x="2.7" width="1.9" height="6" fill="#2a2a2a"/></pattern></defs>
<path d="M13 1L25 7.3L13 13.5L1 7.3Z" fill="#8ad3ff"/><path d="M25 7.3V19.7L13 26V13.5Z" fill="#8ad3ff"/><path d="M1 7.3L13 13.5V26L1 19.7Z" fill="url(#st2310_173)"/><path d="M13 13.5V26M1 7.3L13 13.5L25 7.3" stroke="#0d3556" stroke-width="1.6" fill="none" stroke-linejoin="round"/></svg>
<div class="t" style="left:2343px;top:167px;font-size:24.5px;color:#d2d2d2;font-weight:bold;">drone Black</div>
<svg style="left:2726px;top:175px;" width="8" height="24" viewBox="0 0 8 24"><circle cx="4" cy="4.5" r="2.8" fill="#c4c4c4"/><circle cx="4" cy="12" r="2.8" fill="#c4c4c4"/><circle cx="4" cy="19.5" r="2.8" fill="#c4c4c4"/></svg>
<div style="left:2105px;top:214px;width:4px;height:28px;background:#4a86c8;"></div>
<svg style="left:2137px;top:222px;" width="18" height="14" viewBox="0 0 18 14"><path d="M0 0H18L9.0 14Z" fill="#7a7a7a"/></svg>
<svg style="left:2162px;top:212px;" width="27" height="29.7" viewBox="0 0 26 26" preserveAspectRatio="none"><defs><pattern id="st2162_213" width="4.6" height="6" patternUnits="userSpaceOnUse" patternTransform="rotate(45)"><rect width="2.7" height="6" fill="#d0d0d0"/><rect x="2.7" width="1.9" height="6" fill="#2a2a2a"/></pattern></defs>
<path d="M13 1L25 7.3L13 13.5L1 7.3Z" fill="#8ad3ff"/><path d="M25 7.3V19.7L13 26V13.5Z" fill="#8ad3ff"/><path d="M1 7.3L13 13.5V26L1 19.7Z" fill="url(#st2162_213)"/><path d="M13 13.5V26M1 7.3L13 13.5L25 7.3" stroke="#0d3556" stroke-width="1.6" fill="none" stroke-linejoin="round"/><path d="M13 1.5L24.5 7.5V19.5L13 25.5L1.5 19.5V7.5Z" stroke="#0d3556" stroke-width="1.5" fill="none" stroke-linejoin="round"/></svg>
<div class="t" style="left:2198px;top:207px;font-size:25.5px;color:#8aa9e0;">drone Black</div>
<svg style="left:2733px;top:217px;" width="12" height="20" viewBox="0 0 12 20"><path d="M2.5 2.5L10 10L2.5 17.5" stroke="#8a8a8a" stroke-width="3" fill="none"/></svg>
<svg style="left:2165px;top:254px;" width="17" height="13" viewBox="0 0 17 13"><path d="M0 0H17L8.5 13Z" fill="#7a7a7a"/></svg>
<svg style="left:2191px;top:245px;" width="26" height="28" viewBox="0 0 26 28"><path d="M13 2L24 8V20L13 26L2 20V8Z M2 8L13 14L24 8 M13 14V26" stroke="#c4c4c4" stroke-width="2.2" fill="none" stroke-linejoin="round"/></svg>
<div class="t" style="left:2226px;top:239px;font-size:25.5px;color:#8aa9e0;">Fans</div>
<svg style="left:2219px;top:277px;" width="26" height="28" viewBox="0 0 26 28"><path d="M13 2L24 8V20L13 26L2 20V8Z M2 8L13 14L24 8 M13 14V26" stroke="#c4c4c4" stroke-width="2.2" fill="none" stroke-linejoin="round"/></svg>
<div class="t" style="left:2254px;top:271px;font-size:25.5px;color:#8aa9e0;">fan.003</div>
<svg style="left:2219px;top:309px;" width="26" height="28" viewBox="0 0 26 28"><path d="M13 2L24 8V20L13 26L2 20V8Z M2 8L13 14L24 8 M13 14V26" stroke="#c4c4c4" stroke-width="2.2" fill="none" stroke-linejoin="round"/></svg>
<div class="t" style="left:2254px;top:303px;font-size:25.5px;color:#8aa9e0;">fan.001</div>
<svg style="left:2219px;top:341px;" width="26" height="28" viewBox="0 0 26 28"><path d="M13 2L24 8V20L13 26L2 20V8Z M2 8L13 14L24 8 M13 14V26" stroke="#c4c4c4" stroke-width="2.2" fill="none" stroke-linejoin="round"/></svg>
<div class="t" style="left:2254px;top:335px;font-size:25.5px;color:#8aa9e0;">fan.002</div>
<svg style="left:2219px;top:373px;" width="26" height="28" viewBox="0 0 26 28"><path d="M13 2L24 8V20L13 26L2 20V8Z M2 8L13 14L24 8 M13 14V26" stroke="#c4c4c4" stroke-width="2.2" fill="none" stroke-linejoin="round"/></svg>
<div class="t" style="left:2254px;top:367px;font-size:25.5px;color:#8aa9e0;">fan.004</div>
<svg style="left:2191px;top:406px;" width="26" height="28" viewBox="0 0 26 28"><path d="M13 2L24 8V20L13 26L2 20V8Z M2 8L13 14L24 8 M13 14V26" stroke="#c4c4c4" stroke-width="2.2" fill="none" stroke-linejoin="round"/></svg>
<div class="t" style="left:2226px;top:400px;font-size:25.5px;color:#8aa9e0;">Eye</div>
<svg style="left:2191px;top:438px;" width="26" height="28" viewBox="0 0 26 28"><path d="M13 2L24 8V20L13 26L2 20V8Z M2 8L13 14L24 8 M13 14V26" stroke="#c4c4c4" stroke-width="2.2" fill="none" stroke-linejoin="round"/></svg>
<div class="t" style="left:2226px;top:432px;font-size:25.5px;color:#8aa9e0;">stand</div>
<svg style="left:2191px;top:470px;" width="26" height="28" viewBox="0 0 26 28"><path d="M13 2L24 8V20L13 26L2 20V8Z M2 8L13 14L24 8 M13 14V26" stroke="#c4c4c4" stroke-width="2.2" fill="none" stroke-linejoin="round"/></svg>
<div class="t" style="left:2226px;top:464px;font-size:25.5px;color:#8aa9e0;">Logo</div>
<svg style="left:2060px;top:1185px;" width="25" height="22" viewBox="0 0 25 22"><path d="M0 2Q0 0 2 0H9L12 4H23Q25 4 25 6V20Q25 22 23 22H2Q0 22 0 20Z" fill="#c4c4c4"/></svg>
<div class="t" style="left:2094px;top:1174px;font-size:25.5px;color:#c4c4c4;">Project</div>
<svg style="left:2685px;top:1183px;" width="18" height="22" viewBox="0 0 18 22"><path d="M3.2 5.2A5.4 5.4 0 0 1 13.5 6.5V11" stroke="#c4c4c4" stroke-width="2.2" fill="none"/><rect x="1.1" y="10.8" width="15" height="9" rx="1" fill="none" stroke="#c4c4c4" stroke-width="2.2"/></svg>
<svg style="left:2723px;top:1181px;" width="8" height="24" viewBox="0 0 8 24"><circle cx="4" cy="4.5" r="2.8" fill="#c4c4c4"/><circle cx="4" cy="12" r="2.8" fill="#c4c4c4"/><circle cx="4" cy="19.5" r="2.8" fill="#c4c4c4"/></svg>
<svg style="left:2054px;top:1225px;" width="25" height="24" viewBox="0 0 25 24"><path d="M12.5 0V24M0 12H25" stroke="#c4c4c4" stroke-width="3.6"/></svg>
<svg style="left:2088px;top:1233px;" width="14" height="8" viewBox="0 0 14 8"><path d="M0 0H14L7.0 8Z" fill="#c4c4c4"/></svg>
<div style="left:2132px;top:1221px;width:375px;height:33px;background:#2a2a2a;border-radius:8px;box-shadow:inset 0 0 0 1px #141414;border-top:1.5px solid #0a0a0a;"></div>
<div style="left:2473px;top:1222px;width:34px;height:31px;background:#2e2e2e;border-radius:0 7px 7px 0;"></div>
<svg style="left:2141px;top:1229px;" width="16" height="17" viewBox="0 0 16 17"><circle cx="6" cy="6" r="4.5" stroke="#c4c4c4" stroke-width="2" fill="none"/><path d="M9 9L15 15" stroke="#c4c4c4" stroke-width="2.4"/></svg>
<svg style="left:2478px;top:1226px;" width="24" height="24" viewBox="0 0 24 24"><rect x="7" y="1" width="16" height="16" stroke="#c4c4c4" stroke-width="2" fill="none"/><rect x="1" y="14" width="9" height="9" stroke="#c4c4c4" stroke-width="2" fill="#2e2e2e"/><path d="M9 15L19 5M12 5H19V12" stroke="#c4c4c4" stroke-width="2" fill="none"/></svg>
<div style="left:2512px;top:1217px;width:2px;height:40px;background:#2c2c2c;"></div>
<div style="left:2564px;top:1217px;width:2px;height:40px;background:#2c2c2c;"></div>
<div style="left:2616px;top:1217px;width:2px;height:40px;background:#2c2c2c;"></div>
<div style="left:2667px;top:1217px;width:2px;height:40px;background:#2c2c2c;"></div>
<svg style="left:2526px;top:1222px;" width="26" height="28" viewBox="0 0 26 28"><rect x="1.7" y="0.9" width="12.6" height="11.8" fill="#c4c4c4"/><path d="M14.5 7.5L24 19H9Z" fill="#c4c4c4"/><circle cx="6.8" cy="20.3" r="8.8" fill="#3c3c3c"/><circle cx="6.8" cy="20.3" r="7.2" fill="#c4c4c4"/></svg>
<svg style="left:2578px;top:1227px;" width="21" height="21" viewBox="0 0 21 21"><path d="M12 1H20V9L9 20L1 12Z" fill="#c4c4c4"/><circle cx="15.5" cy="5.5" r="1.8" fill="#3c3c3c"/></svg>
<svg style="left:2628px;top:1223px;" width="27" height="27" viewBox="0 0 27 27"><path d="M8.5 0.5H18.5L26.5 8.5V18.5L18.5 26.5H8.5L0.5 18.5V8.5Z" fill="#c4c4c4" stroke="#c4c4c4" stroke-linejoin="round" stroke-width="1"/><path d="M12 4.5H15L14.2 17H12.8Z" fill="#3c3c3c"/><circle cx="13.5" cy="20.5" r="2" fill="#3c3c3c"/></svg>
<svg style="left:2681px;top:1229px;" width="28" height="18" viewBox="0 0 28 18"><path d="M1 9Q14 -5 27 9Q14 23 1 9Z" stroke="#8a8a8a" stroke-width="2.2" fill="none"/><circle cx="14" cy="9" r="5" fill="#8a8a8a"/></svg>
<div class="t" style="left:2714px;top:1217px;font-size:25.5px;color:#c4c4c4;">30</div>
<div style="left:2041px;top:1523px;width:687px;height:31px;background:#2c5d93;"></div>
<svg style="left:2050px;top:1276px;" width="17" height="13" viewBox="0 0 17 13"><path d="M0 0H17L8.5 13Z" fill="#7a7a7a"/></svg>
<svg style="left:2076px;top:1270px;" width="28" height="24" viewBox="0 0 28 24"><path d="M1 3Q1 1 3 1H10L13 4H23Q25 4 25 6V8H7L1 22Z" fill="none" stroke="#c4c4c4" stroke-width="2"/><path d="M6 9H28L23 23H1Z" fill="#c4c4c4"/></svg>
<div class="t" style="left:2111px;top:1262px;font-size:24.5px;color:#d6d6d6;font-weight:bold;">Assets</div>
<svg style="left:2105px;top:1300px;" width="21" height="28" viewBox="0 0 21 28"><path d="M1 3Q1 1 3 1H15L20 6V25Q20 27 18 27H3Q1 27 1 25Z" fill="#e8e8e8"/><path d="M10.5 8L17 11.5V19L10.5 22.5L4 19V11.5Z" fill="#4a78b8" stroke="#1e3050" stroke-width="1.2"/><path d="M4 11.5L10.5 15L17 11.5M10.5 15V22.5" stroke="#1e3050" stroke-width="1.2" fill="none"/></svg>
<div class="t" style="left:2138px;top:1294px;font-size:25.5px;color:#c4c4c4;">DefaultVolumeProfile</div>
<svg style="left:2078px;top:1340px;" width="17" height="13" viewBox="0 0 17 13"><path d="M0 0H17L8.5 13Z" fill="#7a7a7a"/></svg>
<svg style="left:2105px;top:1334px;" width="28" height="24" viewBox="0 0 28 24"><path d="M1 3Q1 1 3 1H10L13 4H23Q25 4 25 6V8H7L1 22Z" fill="none" stroke="#c4c4c4" stroke-width="2"/><path d="M6 9H28L23 23H1Z" fill="#c4c4c4"/></svg>
<div class="t" style="left:2138px;top:1326px;font-size:25.5px;color:#c4c4c4;">Drone</div>
<svg style="left:2109px;top:1370px;" width="13" height="17" viewBox="0 0 13 17"><path d="M0 0V17L13 8.5Z" fill="#7a7a7a"/></svg>
<svg style="left:2133px;top:1368px;" width="24" height="21" viewBox="0 0 25 22"><path d="M0 2Q0 0 2 0H9L12 4H23Q25 4 25 6V20Q25 22 23 22H2Q0 22 0 20Z" fill="#c4c4c4"/></svg>
<div class="t" style="left:2166px;top:1358px;font-size:25.5px;color:#c4c4c4;">Animation</div>
<svg style="left:2109px;top:1402px;" width="13" height="17" viewBox="0 0 13 17"><path d="M0 0V17L13 8.5Z" fill="#7a7a7a"/></svg>
<svg style="left:2133px;top:1400px;" width="24" height="21" viewBox="0 0 25 22"><path d="M0 2Q0 0 2 0H9L12 4H23Q25 4 25 6V20Q25 22 23 22H2Q0 22 0 20Z" fill="#c4c4c4"/></svg>
<div class="t" style="left:2166px;top:1390px;font-size:25.5px;color:#c4c4c4;">Materials</div>
<svg style="left:2109px;top:1434px;" width="13" height="17" viewBox="0 0 13 17"><path d="M0 0V17L13 8.5Z" fill="#7a7a7a"/></svg>
<svg style="left:2133px;top:1432px;" width="24" height="21" viewBox="0 0 25 22"><path d="M0 2Q0 0 2 0H9L12 4H23Q25 4 25 6V20Q25 22 23 22H2Q0 22 0 20Z" fill="#c4c4c4"/></svg>
<div class="t" style="left:2166px;top:1422px;font-size:25.5px;color:#c4c4c4;">Model</div>
<svg style="left:2107px;top:1468px;" width="17" height="13" viewBox="0 0 17 13"><path d="M0 0H17L8.5 13Z" fill="#7a7a7a"/></svg>
<svg style="left:2133px;top:1462px;" width="28" height="24" viewBox="0 0 28 24"><path d="M1 3Q1 1 3 1H10L13 4H23Q25 4 25 6V8H7L1 22Z" fill="none" stroke="#c4c4c4" stroke-width="2"/><path d="M6 9H28L23 23H1Z" fill="#c4c4c4"/></svg>
<div class="t" style="left:2166px;top:1454px;font-size:25.5px;color:#c4c4c4;">Prefab</div>
<svg style="left:2159px;top:1492px;" width="26" height="28.6" viewBox="0 0 26 26" preserveAspectRatio="none"><defs><pattern id="st2159_1493" width="4.6" height="6" patternUnits="userSpaceOnUse" patternTransform="rotate(45)"><rect width="2.7" height="6" fill="#d0d0d0"/><rect x="2.7" width="1.9" height="6" fill="#2a2a2a"/></pattern></defs>
<path d="M13 1L25 7.3L13 13.5L1 7.3Z" fill="#8ad3ff"/><path d="M25 7.3V19.7L13 26V13.5Z" fill="#8ad3ff"/><path d="M1 7.3L13 13.5V26L1 19.7Z" fill="url(#st2159_1493)"/><path d="M13 13.5V26M1 7.3L13 13.5L25 7.3" stroke="#0d3556" stroke-width="1.6" fill="none" stroke-linejoin="round"/></svg>
<div class="t" style="left:2194px;top:1486px;font-size:25.5px;color:#c4c4c4;">drone black and white Variant</div>
<svg style="left:2159px;top:1524px;" width="26" height="28.6" viewBox="0 0 26 26" preserveAspectRatio="none"><defs><pattern id="st2159_1525" width="4.6" height="6" patternUnits="userSpaceOnUse" patternTransform="rotate(45)"><rect width="2.7" height="6" fill="#d0d0d0"/><rect x="2.7" width="1.9" height="6" fill="#2a2a2a"/></pattern></defs>
<path d="M13 1L25 7.3L13 13.5L1 7.3Z" fill="#ffffff"/><path d="M25 7.3V19.7L13 26V13.5Z" fill="#ffffff"/><path d="M1 7.3L13 13.5V26L1 19.7Z" fill="url(#st2159_1525)"/><path d="M13 13.5V26M1 7.3L13 13.5L25 7.3" stroke="#0d3556" stroke-width="1.6" fill="none" stroke-linejoin="round"/></svg>
<div class="t" style="left:2194px;top:1518px;font-size:25.5px;color:#ffffff;">drone Black</div>
<svg style="left:2159px;top:1556px;" width="26" height="28.6" viewBox="0 0 26 26" preserveAspectRatio="none"><defs><pattern id="st2159_1557" width="4.6" height="6" patternUnits="userSpaceOnUse" patternTransform="rotate(45)"><rect width="2.7" height="6" fill="#d0d0d0"/><rect x="2.7" width="1.9" height="6" fill="#2a2a2a"/></pattern></defs>
<path d="M13 1L25 7.3L13 13.5L1 7.3Z" fill="#8ad3ff"/><path d="M25 7.3V19.7L13 26V13.5Z" fill="#8ad3ff"/><path d="M1 7.3L13 13.5V26L1 19.7Z" fill="url(#st2159_1557)"/><path d="M13 13.5V26M1 7.3L13 13.5L25 7.3" stroke="#0d3556" stroke-width="1.6" fill="none" stroke-linejoin="round"/></svg>
<div class="t" style="left:2194px;top:1550px;font-size:25.5px;color:#c4c4c4;">drone blue</div>
<svg style="left:2159px;top:1588px;" width="26" height="28.6" viewBox="0 0 26 26" preserveAspectRatio="none"><defs><pattern id="st2159_1589" width="4.6" height="6" patternUnits="userSpaceOnUse" patternTransform="rotate(45)"><rect width="2.7" height="6" fill="#d0d0d0"/><rect x="2.7" width="1.9" height="6" fill="#2a2a2a"/></pattern></defs>
<path d="M13 1L25 7.3L13 13.5L1 7.3Z" fill="#8ad3ff"/><path d="M25 7.3V19.7L13 26V13.5Z" fill="#8ad3ff"/><path d="M1 7.3L13 13.5V26L1 19.7Z" fill="url(#st2159_1589)"/><path d="M13 13.5V26M1 7.3L13 13.5L25 7.3" stroke="#0d3556" stroke-width="1.6" fill="none" stroke-linejoin="round"/></svg>
<div class="t" style="left:2194px;top:1582px;font-size:25.5px;color:#c4c4c4;">drone green Variant</div>
<svg style="left:2159px;top:1620px;" width="26" height="28.6" viewBox="0 0 26 26" preserveAspectRatio="none"><defs><pattern id="st2159_1621" width="4.6" height="6" patternUnits="userSpaceOnUse" patternTransform="rotate(45)"><rect width="2.7" height="6" fill="#d0d0d0"/><rect x="2.7" width="1.9" height="6" fill="#2a2a2a"/></pattern></defs>
<path d="M13 1L25 7.3L13 13.5L1 7.3Z" fill="#8ad3ff"/><path d="M25 7.3V19.7L13 26V13.5Z" fill="#8ad3ff"/><path d="M1 7.3L13 13.5V26L1 19.7Z" fill="url(#st2159_1621)"/><path d="M13 13.5V26M1 7.3L13 13.5L25 7.3" stroke="#0d3556" stroke-width="1.6" fill="none" stroke-linejoin="round"/></svg>
<div class="t" style="left:2194px;top:1614px;font-size:25.5px;color:#c4c4c4;">drone orange Variant</div>
<svg style="left:2159px;top:1652px;" width="26" height="28.6" viewBox="0 0 26 26" preserveAspectRatio="none"><defs><pattern id="st2159_1653" width="4.6" height="6" patternUnits="userSpaceOnUse" patternTransform="rotate(45)"><rect width="2.7" height="6" fill="#d0d0d0"/><rect x="2.7" width="1.9" height="6" fill="#2a2a2a"/></pattern></defs>
<path d="M13 1L25 7.3L13 13.5L1 7.3Z" fill="#8ad3ff"/><path d="M25 7.3V19.7L13 26V13.5Z" fill="#8ad3ff"/><path d="M1 7.3L13 13.5V26L1 19.7Z" fill="#8ad3ff"/><path d="M13 13.5V26M1 7.3L13 13.5L25 7.3" stroke="#0d3556" stroke-width="1.6" fill="none" stroke-linejoin="round"/></svg>
<div class="t" style="left:2194px;top:1646px;font-size:25.5px;color:#c4c4c4;">drone</div>
<svg style="left:2080px;top:1690px;" width="13" height="17" viewBox="0 0 13 17"><path d="M0 0V17L13 8.5Z" fill="#7a7a7a"/></svg>
<svg style="left:2105px;top:1688px;" width="24" height="21" viewBox="0 0 25 22"><path d="M0 2Q0 0 2 0H9L12 4H23Q25 4 25 6V20Q25 22 23 22H2Q0 22 0 20Z" fill="#c4c4c4"/></svg>
<div class="t" style="left:2138px;top:1678px;font-size:25.5px;color:#c4c4c4;">EngineV8</div>
<svg style="left:2080px;top:1722px;" width="13" height="17" viewBox="0 0 13 17"><path d="M0 0V17L13 8.5Z" fill="#7a7a7a"/></svg>
<svg style="left:2105px;top:1720px;" width="24" height="21" viewBox="0 0 25 22"><path d="M0 2Q0 0 2 0H9L12 4H23Q25 4 25 6V20Q25 22 23 22H2Q0 22 0 20Z" fill="#c4c4c4"/></svg>
<div class="t" style="left:2138px;top:1710px;font-size:25.5px;color:#c4c4c4;">Fonts</div>
<svg style="left:2080px;top:1754px;" width="13" height="17" viewBox="0 0 13 17"><path d="M0 0V17L13 8.5Z" fill="#7a7a7a"/></svg>
<svg style="left:2103px;top:1750px;" width="30" height="26" viewBox="0 0 30 26"><path d="M1 3L9 1L18 3L27 1V22L18 24L9 22L1 24Z" fill="#e6e6e6"/><path d="M9 1V22M18 3V24" stroke="#9a9a9a" stroke-width="2"/><path d="M22 8L17 16H21L19 24L26 13H22L24 8Z" fill="#4aa3e0"/></svg>
<div class="t" style="left:2138px;top:1742px;font-size:25.5px;color:#c4c4c4;">MagicLeapInput</div>
<svg style="left:2105px;top:1781px;" width="30" height="28" viewBox="0 0 30 28"><path d="M12 2L22 7V17L12 22L2 17V7Z M2 7L12 12L22 7 M12 12V22" stroke="#7ec4f0" stroke-width="2" fill="none"/><path d="M20 15Q17 15 17 18V20Q17 22 15 22Q17 22 17 24V26Q17 28 20 28M25 15Q28 15 28 18V20Q28 22 30 22Q28 22 28 24V26Q28 28 25 28" stroke="#e8805a" stroke-width="2" fill="none"/></svg>
<div class="t" style="left:2138px;top:1774px;font-size:25.5px;color:#c4c4c4;">MagicLeapSettings</div>
<svg style="left:2080px;top:1818px;" width="13" height="17" viewBox="0 0 13 17"><path d="M0 0V17L13 8.5Z" fill="#7a7a7a"/></svg>
<svg style="left:2105px;top:1816px;" width="24" height="21" viewBox="0 0 25 22"><path d="M0 2Q0 0 2 0H9L12 4H23Q25 4 25 6V20Q25 22 23 22H2Q0 22 0 20Z" fill="#c4c4c4"/></svg>
<div class="t" style="left:2138px;top:1806px;font-size:25.5px;color:#c4c4c4;">Materials</div>
<svg style="left:2080px;top:1850px;" width="13" height="17" viewBox="0 0 13 17"><path d="M0 0V17L13 8.5Z" fill="#7a7a7a"/></svg>
<svg style="left:2105px;top:1848px;" width="24" height="21" viewBox="0 0 25 22"><path d="M0 2Q0 0 2 0H9L12 4H23Q25 4 25 6V20Q25 22 23 22H2Q0 22 0 20Z" fill="#c4c4c4"/></svg>
<div class="t" style="left:2138px;top:1838px;font-size:25.5px;color:#c4c4c4;">Models</div>
<svg style="left:2080px;top:1882px;" width="13" height="17" viewBox="0 0 13 17"><path d="M0 0V17L13 8.5Z" fill="#7a7a7a"/></svg>
<svg style="left:2105px;top:1880px;" width="24" height="21" viewBox="0 0 25 22"><path d="M0 2Q0 0 2 0H9L12 4H23Q25 4 25 6V20Q25 22 23 22H2Q0 22 0 20Z" fill="#c4c4c4"/></svg>
<div class="t" style="left:2138px;top:1870px;font-size:25.5px;color:#c4c4c4;">Plugins</div>
<svg style="left:2080px;top:1914px;" width="13" height="17" viewBox="0 0 13 17"><path d="M0 0V17L13 8.5Z" fill="#7a7a7a"/></svg>
<svg style="left:2105px;top:1912px;" width="24" height="21" viewBox="0 0 25 22"><path d="M0 2Q0 0 2 0H9L12 4H23Q25 4 25 6V20Q25 22 23 22H2Q0 22 0 20Z" fill="#c4c4c4"/></svg>
<div class="t" style="left:2138px;top:1902px;font-size:25.5px;color:#c4c4c4;">Prefabs</div>
<svg style="left:2105px;top:1944px;" width="24" height="21" viewBox="0 0 24 21"><path d="M1 2H9L12 5H23V20H1Z" stroke="#c4c4c4" stroke-width="2" fill="none"/></svg>
<div class="t" style="left:2138px;top:1934px;font-size:25.5px;color:#c4c4c4;">Resources</div>
<svg style="left:2080px;top:1978px;" width="13" height="17" viewBox="0 0 13 17"><path d="M0 0V17L13 8.5Z" fill="#7a7a7a"/></svg>
<svg style="left:2105px;top:1976px;" width="24" height="21" viewBox="0 0 25 22"><path d="M0 2Q0 0 2 0H9L12 4H23Q25 4 25 6V20Q25 22 23 22H2Q0 22 0 20Z" fill="#c4c4c4"/></svg>
<div class="t" style="left:2138px;top:1966px;font-size:25.5px;color:#c4c4c4;">Scenes</div>
<svg style="left:2080px;top:2010px;" width="13" height="17" viewBox="0 0 13 17"><path d="M0 0V17L13 8.5Z" fill="#7a7a7a"/></svg>
<svg style="left:2105px;top:2008px;" width="24" height="21" viewBox="0 0 25 22"><path d="M0 2Q0 0 2 0H9L12 4H23Q25 4 25 6V20Q25 22 23 22H2Q0 22 0 20Z" fill="#c4c4c4"/></svg>
<div class="t" style="left:2138px;top:1998px;font-size:25.5px;color:#c4c4c4;">Scripts</div>
<svg style="left:2080px;top:2042px;" width="13" height="17" viewBox="0 0 13 17"><path d="M0 0V17L13 8.5Z" fill="#7a7a7a"/></svg>
<svg style="left:2105px;top:2040px;" width="24" height="21" viewBox="0 0 25 22"><path d="M0 2Q0 0 2 0H9L12 4H23Q25 4 25 6V20Q25 22 23 22H2Q0 22 0 20Z" fill="#c4c4c4"/></svg>
<div class="t" style="left:2138px;top:2030px;font-size:25.5px;color:#c4c4c4;">Settings</div>
<svg style="left:2080px;top:2074px;" width="13" height="17" viewBox="0 0 13 17"><path d="M0 0V17L13 8.5Z" fill="#7a7a7a"/></svg>
<svg style="left:2105px;top:2072px;" width="24" height="21" viewBox="0 0 25 22"><path d="M0 2Q0 0 2 0H9L12 4H23Q25 4 25 6V20Q25 22 23 22H2Q0 22 0 20Z" fill="#c4c4c4"/></svg>
<div class="t" style="left:2138px;top:2062px;font-size:25.5px;color:#c4c4c4;">TextMesh Pro</div>
<div style="left:2041px;top:2074px;width:713px;height:42px;background:#3c3c3c;"></div>
<svg style="left:2050px;top:2082px;" width="27" height="29.7" viewBox="0 0 26 26" preserveAspectRatio="none"><defs><pattern id="st2050_2083" width="4.6" height="6" patternUnits="userSpaceOnUse" patternTransform="rotate(45)"><rect width="2.7" height="6" fill="#d0d0d0"/><rect x="2.7" width="1.9" height="6" fill="#2a2a2a"/></pattern></defs>
<path d="M13 1L25 7.3L13 13.5L1 7.3Z" fill="#8ad3ff"/><path d="M25 7.3V19.7L13 26V13.5Z" fill="#8ad3ff"/><path d="M1 7.3L13 13.5V26L1 19.7Z" fill="url(#st2050_2083)"/><path d="M13 13.5V26M1 7.3L13 13.5L25 7.3" stroke="#0d3556" stroke-width="1.6" fill="none" stroke-linejoin="round"/></svg>
<div class="t" style="left:2084px;top:2076px;font-size:25.5px;color:#c4c4c4;">Assets/Drone/Prefab/drone Black.prefab</div>
<div style="left:2728px;top:1259px;width:26px;height:815px;background:#383838;"></div>
<svg style="left:2733px;top:1268px;" width="16" height="10" viewBox="0 0 16 10"><path d="M0 10H16L8 0Z" fill="#c4c4c4"/></svg>
<div style="left:2732px;top:1292px;width:20px;height:617px;background:#5a5a5a;border-radius:10px;"></div>
<svg style="left:2733px;top:2053px;" width="16" height="10" viewBox="0 0 16 10"><path d="M0 0H16L8 10Z" fill="#c4c4c4"/></svg>
<div style="left:2076px;top:1450px;width:627px;height:248px;background:transparent;border:10px solid #fdf55a;"></div>
<svg style="left:2780px;top:86px;" width="21" height="21" viewBox="0 0 21 21"><circle cx="10.5" cy="10.5" r="10.5" fill="#c4c4c4"/><circle cx="10.5" cy="5.5" r="1.9" fill="#3c3c3c"/><rect x="8.6" y="8.5" width="3.8" height="8.5" fill="#3c3c3c"/></svg>
<div class="t" style="left:2810px;top:77px;font-size:25.5px;color:#c4c4c4;">Inspector</div>
<svg style="left:3384px;top:86px;" width="18" height="22" viewBox="0 0 18 22"><path d="M3.2 5.2A5.4 5.4 0 0 1 13.5 6.5V11" stroke="#c4c4c4" stroke-width="2.2" fill="none"/><rect x="1.1" y="10.8" width="15" height="9" rx="1" fill="none" stroke="#c4c4c4" stroke-width="2.2"/></svg>
<svg style="left:3424px;top:84px;" width="8" height="24" viewBox="0 0 8 24"><circle cx="4" cy="4.5" r="2.8" fill="#c4c4c4"/><circle cx="4" cy="12" r="2.8" fill="#c4c4c4"/><circle cx="4" cy="19.5" r="2.8" fill="#c4c4c4"/></svg>
<div style="left:2770px;top:132px;width:64px;height:64px;background:#505050;"></div>
<svg style="left:2770px;top:132px;" width="64" height="64" viewBox="0 0 64 64"><g stroke="#6cf05e" stroke-width="1.6" fill="none"><ellipse cx="14" cy="42" rx="9" ry="3.5"/><ellipse cx="34" cy="24" rx="6" ry="2.5"/><ellipse cx="54" cy="35" rx="7" ry="3"/><ellipse cx="38" cy="47" rx="8" ry="3.5"/></g>
<path d="M14 42L30 36L54 35M34 24L36 38L38 47" stroke="#888" stroke-width="1.2"/><path d="M26 34L44 36L46 42L30 40Z" fill="#1a1a1a"/></svg>
<div class="t" style="left:2850px;top:127px;font-size:27.5px;color:#c4c4c4;">drone Black (Prefab Asset)</div>
<svg style="left:3372px;top:136px;" width="22" height="22" viewBox="0 0 22 22"><circle cx="11" cy="11" r="10.5" fill="#c4c4c4"/><path d="M7.5 8.5A3.5 3.5 0 1 1 12.2 11.8C11.3 12.2 11 12.8 11 13.8" stroke="#3e3e3e" stroke-width="2.6" fill="none"/><circle cx="11" cy="17" r="1.6" fill="#3e3e3e"/></svg>
<svg style="left:3410px;top:135px;" width="8" height="24" viewBox="0 0 8 24"><circle cx="4" cy="4.5" r="2.8" fill="#c4c4c4"/><circle cx="4" cy="12" r="2.8" fill="#c4c4c4"/><circle cx="4" cy="19.5" r="2.8" fill="#c4c4c4"/></svg>
<div style="left:3239px;top:182px;width:85px;height:32px;background:#515151;border-radius:5px;box-shadow:inset 0 0 0 1px #303030;"></div>
<svg style="left:3256px;top:190px;" width="22" height="17" viewBox="0 0 22 17"><circle cx="2.2" cy="2" r="2" fill="#c4c4c4"/><circle cx="6" cy="9" r="2" fill="#c4c4c4"/><circle cx="6" cy="15" r="2" fill="#c4c4c4"/><path d="M6 2H21M10 9H21M10 15H21" stroke="#c4c4c4" stroke-width="2.2"/></svg>
<svg style="left:3298px;top:195px;" width="15" height="8" viewBox="0 0 15 8"><path d="M0 0H15L7.5 8Z" fill="#c4c4c4"/></svg>
<div style="left:3333px;top:178px;width:87px;height:33px;background:#515151;border-radius:5px;box-shadow:inset 0 0 0 1px #303030;"></div>
<div class="t" style="left:3347px;top:174px;font-size:25.5px;color:#e0e0e0;">Open</div>
<div class="t" style="left:2850px;top:215px;font-size:25.5px;color:#8a8a8a;">Variant Parent</div>
<div style="left:3033px;top:218px;width:386px;height:33px;background:#2c2c2c;border-radius:5px;box-shadow:inset 0 0 0 1px #222;"></div>
<div style="left:3383px;top:219px;width:35px;height:31px;background:#303030;border-radius:0 5px 5px 0;"></div>
<svg style="left:3039px;top:221px;" width="24" height="26.4" viewBox="0 0 26 26" preserveAspectRatio="none"><defs><pattern id="st3039_222" width="4.6" height="6" patternUnits="userSpaceOnUse" patternTransform="rotate(45)"><rect width="2.7" height="6" fill="#d0d0d0"/><rect x="2.7" width="1.9" height="6" fill="#2a2a2a"/></pattern></defs>
<path d="M13 1L25 7.3L13 13.5L1 7.3Z" fill="#8ad3ff"/><path d="M25 7.3V19.7L13 26V13.5Z" fill="#8ad3ff"/><path d="M1 7.3L13 13.5V26L1 19.7Z" fill="url(#st3039_222)"/><path d="M13 13.5V26M1 7.3L13 13.5L25 7.3" stroke="#0d3556" stroke-width="1.6" fill="none" stroke-linejoin="round"/></svg>
<div class="t" style="left:3065px;top:215px;font-size:25.5px;color:#8f8f8f;">drone blue</div>
<svg style="left:3390px;top:224px;" width="22" height="22" viewBox="0 0 22 22"><circle cx="11" cy="11" r="9" stroke="#8a8a8a" stroke-width="2.2" fill="none"/><circle cx="11" cy="11" r="3.6" fill="#8a8a8a"/></svg>
<div style="left:2758px;top:276px;width:672px;height:2px;background:#232323;"></div>
<div style="left:2758px;top:278px;width:672px;height:59px;background:#383838;"></div>
<div style="left:2758px;top:337px;width:672px;height:2px;background:#232323;"></div>
<div class="t" style="left:2767px;top:343px;font-size:25.5px;color:#d2d2d2;">Root in Prefab Asset (Open for full editing support)</div>
<div style="left:2758px;top:391px;width:672px;height:2px;background:#232323;"></div>
<div style="left:2758px;top:410px;width:4px;height:36px;background:#4a86c8;"></div>
<svg style="left:2773px;top:412px;" width="40" height="44.0" viewBox="0 0 26 26" preserveAspectRatio="none"><defs><pattern id="st2773_413" width="4.6" height="6" patternUnits="userSpaceOnUse" patternTransform="rotate(45)"><rect width="2.7" height="6" fill="#d0d0d0"/><rect x="2.7" width="1.9" height="6" fill="#2a2a2a"/></pattern></defs>
<path d="M13 1L25 7.3L13 13.5L1 7.3Z" fill="#8ad3ff"/><path d="M25 7.3V19.7L13 26V13.5Z" fill="#8ad3ff"/><path d="M1 7.3L13 13.5V26L1 19.7Z" fill="url(#st2773_413)"/><path d="M13 13.5V26M1 7.3L13 13.5L25 7.3" stroke="#0d3556" stroke-width="1.6" fill="none" stroke-linejoin="round"/></svg>
<svg style="left:2811px;top:452px;" width="14" height="8" viewBox="0 0 14 8"><path d="M0 0H14L7.0 8Z" fill="#c4c4c4"/></svg>
<svg style="left:2852px;top:414px;" width="28" height="28" viewBox="0 0 28 28"><rect x="0.5" y="0.5" width="27" height="27" rx="4" fill="#2a2a2a" stroke="#1f1f1f"/><path d="M7.0 14.56L12.04 19.599999999999998L21.560000000000002 8.4" stroke="#e8e8e8" stroke-width="3" fill="none"/></svg>
<div style="left:2892px;top:410px;width:377px;height:36px;background:#333333;border-radius:7px;box-shadow:inset 0 0 0 1px #222222;"></div>
<div class="t" style="left:2897px;top:408px;font-size:27px;color:#8c8c8c;font-weight:bold;">drone Black</div>
<svg style="left:3277px;top:414px;" width="27" height="27" viewBox="0 0 27 27"><rect x="0.5" y="0.5" width="26" height="26" rx="4" fill="#2a2a2a" stroke="#1f1f1f"/></svg>
<div class="t" style="left:3313px;top:408px;font-size:25.5px;color:#c4c4c4;">Static</div>
<svg style="left:3402px;top:424px;" width="16" height="9" viewBox="0 0 16 9"><path d="M0 0H16L8.0 9Z" fill="#c4c4c4"/></svg>
<div class="t" style="left:2839px;top:456px;font-size:25.5px;color:#c4c4c4;">Tag</div>
<div style="left:2890px;top:460px;width:225px;height:33px;background:#515151;border-radius:5px;box-shadow:inset 0 0 0 1px #303030;"></div>
<div class="t" style="left:2898px;top:456.5px;font-size:25.5px;color:#d2d2d2;">Untagged</div>
<svg style="left:3090px;top:472.5px;" width="15" height="8" viewBox="0 0 15 8"><path d="M0 0H15L7.5 8Z" fill="#c4c4c4"/></svg>
<div class="t" style="left:3145px;top:456px;font-size:25.5px;color:#c4c4c4;">Layer</div>
<div style="left:3218px;top:460px;width:202px;height:33px;background:#515151;border-radius:5px;box-shadow:inset 0 0 0 1px #303030;"></div>
<div class="t" style="left:3226px;top:456.5px;font-size:25.5px;color:#d2d2d2;">Default</div>
<svg style="left:3395px;top:472.5px;" width="15" height="8" viewBox="0 0 15 8"><path d="M0 0H15L7.5 8Z" fill="#c4c4c4"/></svg>
<div style="left:2758px;top:517px;width:672px;height:2px;background:#232323;"></div>
<div style="left:2758px;top:560px;width:672px;height:912px;background:#383838;"></div>
<div style="left:2758px;top:519px;width:672px;height:41px;background:#3e3e3e;"></div>
<svg style="left:2770px;top:534px;" width="18" height="14" viewBox="0 0 18 14"><path d="M0 0H18L9.0 14Z" fill="#7a7a7a"/></svg>
<svg style="left:2801px;top:528px;" width="27" height="24" viewBox="0 0 27 24"><path d="M13 12V2" stroke="#9be05c" stroke-width="4" stroke-linecap="round"/><path d="M13 13L3 19" stroke="#5ab4e8" stroke-width="4" stroke-linecap="round"/><path d="M13 13L24 19" stroke="#e8805a" stroke-width="4" stroke-linecap="round"/></svg>
<div class="t" style="left:2879px;top:520px;font-size:24.5px;color:#d6d6d6;font-weight:bold;">Transform</div>
<svg style="left:3314px;top:530px;" width="22" height="22" viewBox="0 0 22 22"><circle cx="11" cy="11" r="10.5" fill="#c4c4c4"/><path d="M7.5 8.5A3.5 3.5 0 1 1 12.2 11.8C11.3 12.2 11 12.8 11 13.8" stroke="#3e3e3e" stroke-width="2.6" fill="none"/><circle cx="11" cy="17" r="1.6" fill="#3e3e3e"/></svg>
<svg style="left:3353px;top:530px;" width="22" height="22" viewBox="0 0 22 22"><path d="M0 7H22M0 15H22" stroke="#c4c4c4" stroke-width="2.2"/><rect x="12" y="2" width="3" height="9" fill="#c4c4c4"/><rect x="6" y="11" width="3" height="9" fill="#c4c4c4"/></svg>
<svg style="left:3400px;top:528px;" width="8" height="24" viewBox="0 0 8 24"><circle cx="4" cy="4.5" r="2.8" fill="#c4c4c4"/><circle cx="4" cy="12" r="2.8" fill="#c4c4c4"/><circle cx="4" cy="19.5" r="2.8" fill="#c4c4c4"/></svg>
<div class="t" style="left:2797px;top:568px;font-size:25.5px;color:#c4c4c4;-webkit-text-stroke:0.6px #c4c4c4;">Position</div>
<div class="t" style="left:3041px;top:568px;font-size:25.5px;color:#c4c4c4;-webkit-text-stroke:0.6px #c4c4c4;">X</div>
<div style="left:3070px;top:571px;width:89px;height:35px;background:#2a2a2a;border-radius:5px;box-shadow:inset 0 0 0 1px #212121;"></div>
<div class="t" style="left:3077px;top:568px;font-size:25.5px;color:#d2d2d2;-webkit-text-stroke:0.6px #d2d2d2;">0</div>
<div class="t" style="left:3172px;top:568px;font-size:25.5px;color:#c4c4c4;-webkit-text-stroke:0.6px #c4c4c4;">Y</div>
<div style="left:3201px;top:571px;width:89px;height:35px;background:#2a2a2a;border-radius:5px;box-shadow:inset 0 0 0 1px #212121;"></div>
<div class="t" style="left:3208px;top:568px;font-size:25.5px;color:#d2d2d2;-webkit-text-stroke:0.6px #d2d2d2;">0</div>
<div class="t" style="left:3302px;top:568px;font-size:25.5px;color:#c4c4c4;-webkit-text-stroke:0.6px #c4c4c4;">Z</div>
<div style="left:3331px;top:571px;width:89px;height:35px;background:#2a2a2a;border-radius:5px;box-shadow:inset 0 0 0 1px #212121;"></div>
<div class="t" style="left:3338px;top:568px;font-size:25.5px;color:#d2d2d2;-webkit-text-stroke:0.6px #d2d2d2;">0</div>
<div class="t" style="left:2797px;top:608px;font-size:25.5px;color:#c4c4c4;-webkit-text-stroke:0.6px #c4c4c4;">Rotation</div>
<div class="t" style="left:3041px;top:608px;font-size:25.5px;color:#c4c4c4;-webkit-text-stroke:0.6px #c4c4c4;">X</div>
<div style="left:3070px;top:611px;width:89px;height:35px;background:#2a2a2a;border-radius:5px;box-shadow:inset 0 0 0 1px #212121;"></div>
<div class="t" style="left:3077px;top:608px;font-size:25.5px;color:#d2d2d2;-webkit-text-stroke:0.6px #d2d2d2;">0</div>
<div class="t" style="left:3172px;top:608px;font-size:25.5px;color:#c4c4c4;-webkit-text-stroke:0.6px #c4c4c4;">Y</div>
<div style="left:3201px;top:611px;width:89px;height:35px;background:#2a2a2a;border-radius:5px;box-shadow:inset 0 0 0 1px #212121;"></div>
<div class="t" style="left:3208px;top:608px;font-size:25.5px;color:#d2d2d2;-webkit-text-stroke:0.6px #d2d2d2;">0</div>
<div class="t" style="left:3302px;top:608px;font-size:25.5px;color:#c4c4c4;-webkit-text-stroke:0.6px #c4c4c4;">Z</div>
<div style="left:3331px;top:611px;width:89px;height:35px;background:#2a2a2a;border-radius:5px;box-shadow:inset 0 0 0 1px #212121;"></div>
<div class="t" style="left:3338px;top:608px;font-size:25.5px;color:#d2d2d2;-webkit-text-stroke:0.6px #d2d2d2;">0</div>
<div style="left:2758px;top:650px;width:4px;height:36px;background:#4a86c8;"></div>
<div style="left:2758px;top:636px;width:672px;height:63px;background:transparent;"></div>
<div class="t" style="left:2797px;top:648px;font-size:25.5px;color:#c4c4c4;-webkit-text-stroke:0.6px #c4c4c4;">Scale</div>
<svg style="left:2996px;top:659px;" width="25" height="17" viewBox="0 0 25 17"><rect x="1.2" y="1.2" width="22.6" height="14.6" rx="7.3" stroke="#c4c4c4" stroke-width="2.2" fill="none"/><path d="M8 8.5H17" stroke="#c4c4c4" stroke-width="2.2"/><rect x="10" y="0" width="5" height="4" fill="#3c3c3c"/><rect x="10" y="13" width="5" height="4" fill="#3c3c3c"/></svg>
<div class="t" style="left:3041px;top:648px;font-size:25.5px;color:#c4c4c4;-webkit-text-stroke:0.6px #c4c4c4;">X</div>
<div style="left:3070px;top:651px;width:89px;height:35px;background:#2a2a2a;border-radius:5px;box-shadow:inset 0 0 0 1px #212121;"></div>
<div class="t" style="left:3077px;top:648px;font-size:25.5px;color:#d2d2d2;-webkit-text-stroke:0.6px #d2d2d2;">0.15</div>
<div class="t" style="left:3172px;top:648px;font-size:25.5px;color:#c4c4c4;-webkit-text-stroke:0.6px #c4c4c4;">Y</div>
<div style="left:3201px;top:651px;width:89px;height:35px;background:#2a2a2a;border-radius:5px;box-shadow:inset 0 0 0 1px #212121;"></div>
<div class="t" style="left:3208px;top:648px;font-size:25.5px;color:#d2d2d2;-webkit-text-stroke:0.6px #d2d2d2;">0.15</div>
<div class="t" style="left:3302px;top:648px;font-size:25.5px;color:#c4c4c4;-webkit-text-stroke:0.6px #c4c4c4;">Z</div>
<div style="left:3331px;top:651px;width:89px;height:35px;background:#2a2a2a;border-radius:5px;box-shadow:inset 0 0 0 1px #212121;"></div>
<div class="t" style="left:3338px;top:648px;font-size:25.5px;color:#d2d2d2;-webkit-text-stroke:0.6px #d2d2d2;">0.15</div>
<div style="left:2762px;top:636px;width:677px;height:63px;background:transparent;border:10px solid #fdf55a;border-left-width:11px;"></div>
<div style="left:2758px;top:702px;width:672px;height:2px;background:#232323;"></div>
<div style="left:2758px;top:704px;width:672px;height:44px;background:#3e3e3e;"></div>
<svg style="left:2772px;top:718px;" width="13" height="17" viewBox="0 0 13 17"><path d="M0 0V17L13 8.5Z" fill="#7a7a7a"/></svg>
<svg style="left:2800px;top:712px;" width="27" height="27" viewBox="0 0 27 27"><rect x="1.2" y="1.2" width="24.6" height="24.6" rx="2" stroke="#8ad3ff" stroke-width="2.2" fill="none"/><path d="M9.5 1V26M17.5 1V26M1 9.5H26M1 17.5H26" stroke="#8ad3ff" stroke-width="2.2"/></svg>
<div class="t" style="left:2879px;top:706px;font-size:24.5px;color:#d6d6d6;font-weight:bold;">Drone (Mesh Filter)</div>
<svg style="left:3314px;top:715px;" width="22" height="22" viewBox="0 0 22 22"><circle cx="11" cy="11" r="10.5" fill="#c4c4c4"/><path d="M7.5 8.5A3.5 3.5 0 1 1 12.2 11.8C11.3 12.2 11 12.8 11 13.8" stroke="#3e3e3e" stroke-width="2.6" fill="none"/><circle cx="11" cy="17" r="1.6" fill="#3e3e3e"/></svg>
<svg style="left:3353px;top:715px;" width="22" height="22" viewBox="0 0 22 22"><path d="M0 7H22M0 15H22" stroke="#c4c4c4" stroke-width="2.2"/><rect x="12" y="2" width="3" height="9" fill="#c4c4c4"/><rect x="6" y="11" width="3" height="9" fill="#c4c4c4"/></svg>
<svg style="left:3400px;top:714px;" width="8" height="24" viewBox="0 0 8 24"><circle cx="4" cy="4.5" r="2.8" fill="#c4c4c4"/><circle cx="4" cy="12" r="2.8" fill="#c4c4c4"/><circle cx="4" cy="19.5" r="2.8" fill="#c4c4c4"/></svg>
<div style="left:2758px;top:748px;width:672px;height:2px;background:#232323;"></div>
<div style="left:2758px;top:750px;width:672px;height:41px;background:#3e3e3e;"></div>
<svg style="left:2770px;top:764px;" width="18" height="14" viewBox="0 0 18 14"><path d="M0 0H18L9.0 14Z" fill="#7a7a7a"/></svg>
<svg style="left:2800px;top:756px;" width="30" height="30" viewBox="0 0 30 30"><path d="M26 14V1.2H1.2V26H12" stroke="#8ad3ff" stroke-width="2.2" fill="none"/><path d="M9.5 1V26M17.5 1V14M1 9.5H26M1 17.5H12" stroke="#8ad3ff" stroke-width="2.2"/><path d="M8 23Q19 12 30 23Q19 34 8 23Z" fill="#c4c4c4"/><circle cx="19" cy="23" r="3.5" fill="#3e3e3e"/></svg>
<svg style="left:2839px;top:757px;" width="27" height="27" viewBox="0 0 27 27"><rect x="0.5" y="0.5" width="26" height="26" rx="4" fill="#2a2a2a" stroke="#1f1f1f"/><path d="M6.75 14.040000000000001L11.61 18.9L20.79 8.1" stroke="#e8e8e8" stroke-width="3" fill="none"/></svg>
<div class="t" style="left:2879px;top:751px;font-size:24.5px;color:#d6d6d6;font-weight:bold;">Mesh Renderer</div>
<svg style="left:3314px;top:760px;" width="22" height="22" viewBox="0 0 22 22"><circle cx="11" cy="11" r="10.5" fill="#c4c4c4"/><path d="M7.5 8.5A3.5 3.5 0 1 1 12.2 11.8C11.3 12.2 11 12.8 11 13.8" stroke="#3e3e3e" stroke-width="2.6" fill="none"/><circle cx="11" cy="17" r="1.6" fill="#3e3e3e"/></svg>
<svg style="left:3353px;top:760px;" width="22" height="22" viewBox="0 0 22 22"><path d="M0 7H22M0 15H22" stroke="#c4c4c4" stroke-width="2.2"/><rect x="12" y="2" width="3" height="9" fill="#c4c4c4"/><rect x="6" y="11" width="3" height="9" fill="#c4c4c4"/></svg>
<svg style="left:3400px;top:759px;" width="8" height="24" viewBox="0 0 8 24"><circle cx="4" cy="4.5" r="2.8" fill="#c4c4c4"/><circle cx="4" cy="12" r="2.8" fill="#c4c4c4"/><circle cx="4" cy="19.5" r="2.8" fill="#c4c4c4"/></svg>
<div style="left:2758px;top:790px;width:672px;height:2px;background:#2a2a2a;"></div>
<div style="left:2758px;top:801px;width:4px;height:34px;background:#4a86c8;"></div>
<svg style="left:2770px;top:812px;" width="18" height="14" viewBox="0 0 18 14"><path d="M0 0H18L9.0 14Z" fill="#7a7a7a"/></svg>
<div class="t" style="left:2798px;top:798px;font-size:24.5px;color:#d6d6d6;font-weight:bold;">Materials</div>
<div style="left:3327px;top:801px;width:94px;height:34px;background:#2a2a2a;border-radius:6px;box-shadow:inset 0 0 0 1px #212121;"></div>
<div class="t" style="left:3334px;top:798px;font-size:25.5px;color:#c4c4c4;">2</div>
<div style="left:2795px;top:843px;width:626px;height:91px;background:#3d3d3d;border-radius:6px;box-shadow:inset 0 0 0 1.5px #2a2a2a;"></div>
<div style="left:2758px;top:851px;width:4px;height:34px;background:#4a86c8;"></div>
<div style="left:2758px;top:891px;width:4px;height:34px;background:#4a86c8;"></div>
<div style="left:2806px;top:863px;width:20px;height:2px;background:#7a7a7a;"></div>
<div style="left:2806px;top:871px;width:20px;height:2px;background:#7a7a7a;"></div>
<div class="t" style="left:2855px;top:848px;font-size:25.5px;color:#c4c4c4;-webkit-text-stroke:0.6px #c4c4c4;">Element 0</div>
<div style="left:3037px;top:851px;width:370px;height:34px;background:#2a2a2a;border-radius:6px;box-shadow:inset 0 0 0 1px #1f1f1f;"></div>
<div style="left:3370px;top:852px;width:36px;height:32px;background:#2e2e2e;border-radius:0 6px 6px 0;"></div>
<svg style="left:3042px;top:857px;" width="22" height="22" viewBox="0 0 22 22"><circle cx="11" cy="11" r="9.5" fill="#8ad3ff" stroke="#8ad3ff" stroke-width="1.5"/><path d="M17 5.5A7.5 7.5 0 0 1 4.5 15.5A6.5 6.5 0 0 0 17 5.5Z" fill="#1e2a33"/><circle cx="11" cy="11" r="9.6" fill="none" stroke="#8ad3ff" stroke-width="1.4"/></svg>
<div class="t" style="left:3069px;top:848px;font-size:25.5px;color:#d2d2d2;-webkit-text-stroke:0.6px #d2d2d2;">black</div>
<svg style="left:3378px;top:857px;" width="22" height="22" viewBox="0 0 22 22"><circle cx="11" cy="11" r="9" stroke="#c4c4c4" stroke-width="2.2" fill="none"/><circle cx="11" cy="11" r="3.6" fill="#c4c4c4"/></svg>
<div style="left:2806px;top:903px;width:20px;height:2px;background:#7a7a7a;"></div>
<div style="left:2806px;top:911px;width:20px;height:2px;background:#7a7a7a;"></div>
<div class="t" style="left:2855px;top:888px;font-size:25.5px;color:#c4c4c4;-webkit-text-stroke:0.6px #c4c4c4;">Element 1</div>
<div style="left:3037px;top:891px;width:370px;height:34px;background:#2a2a2a;border-radius:6px;box-shadow:inset 0 0 0 1px #1f1f1f;"></div>
<div style="left:3370px;top:892px;width:36px;height:32px;background:#2e2e2e;border-radius:0 6px 6px 0;"></div>
<svg style="left:3042px;top:897px;" width="22" height="22" viewBox="0 0 22 22"><circle cx="11" cy="11" r="9.5" fill="#8ad3ff" stroke="#8ad3ff" stroke-width="1.5"/><path d="M17 5.5A7.5 7.5 0 0 1 4.5 15.5A6.5 6.5 0 0 0 17 5.5Z" fill="#1e2a33"/><circle cx="11" cy="11" r="9.6" fill="none" stroke="#8ad3ff" stroke-width="1.4"/></svg>
<div class="t" style="left:3069px;top:888px;font-size:25.5px;color:#d2d2d2;-webkit-text-stroke:0.6px #d2d2d2;">Green</div>
<svg style="left:3378px;top:897px;" width="22" height="22" viewBox="0 0 22 22"><circle cx="11" cy="11" r="9" stroke="#c4c4c4" stroke-width="2.2" fill="none"/><circle cx="11" cy="11" r="3.6" fill="#c4c4c4"/></svg>
<div style="left:3287px;top:933px;width:114px;height:39px;background:#3c3c3c;border-radius:0 0 6px 6px;box-shadow:inset 0 -1.5px 0 #2a2a2a,inset 1.5px 0 0 #2a2a2a,inset -1.5px 0 0 #2a2a2a;"></div>
<svg style="left:3309px;top:941px;" width="20" height="20" viewBox="0 0 20 20"><path d="M10 0V20M0 10H20" stroke="#c4c4c4" stroke-width="3.4"/></svg>
<div style="left:3361px;top:949px;width:16px;height:3px;background:#c4c4c4;"></div>
<svg style="left:2770px;top:992px;" width="18" height="14" viewBox="0 0 18 14"><path d="M0 0H18L9.0 14Z" fill="#7a7a7a"/></svg>
<div class="t" style="left:2798px;top:979px;font-size:24.5px;color:#d6d6d6;font-weight:bold;">Lighting</div>
<div class="t" style="left:2827px;top:1019px;font-size:25.5px;color:#c4c4c4;width:210px;overflow:hidden;">Cast Shadows</div>
<div style="left:3040px;top:1023px;width:380px;height:33px;background:#515151;border-radius:5px;box-shadow:inset 0 0 0 1px #303030;"></div>
<div class="t" style="left:3048px;top:1019.5px;font-size:25.5px;color:#d2d2d2;">On</div>
<svg style="left:3395px;top:1035.5px;" width="15" height="8" viewBox="0 0 15 8"><path d="M0 0H15L7.5 8Z" fill="#c4c4c4"/></svg>
<div class="t" style="left:2827px;top:1058px;font-size:25.5px;color:#c4c4c4;width:210px;overflow:hidden;">Static Shadow Caster</div>
<svg style="left:3039px;top:1065px;" width="26" height="26" viewBox="0 0 26 26"><rect x="0.5" y="0.5" width="25" height="25" rx="4" fill="#2a2a2a" stroke="#1f1f1f"/></svg>
<div class="t" style="left:2827px;top:1098px;font-size:25.5px;color:#c4c4c4;width:210px;overflow:hidden;">Contribute Global</div>
<svg style="left:3039px;top:1105px;" width="26" height="26" viewBox="0 0 26 26"><rect x="0.5" y="0.5" width="25" height="25" rx="4" fill="#2a2a2a" stroke="#1f1f1f"/></svg>
<div class="t" style="left:2827px;top:1138px;font-size:25.5px;color:#8a8a8a;width:210px;overflow:hidden;">Receive Global Illumination</div>
<div style="left:3040px;top:1142px;width:380px;height:32px;background:#454545;border-radius:5px;box-shadow:inset 0 0 0 1px #303030;"></div>
<div class="t" style="left:3048px;top:1138.0px;font-size:25.5px;color:#8d8d8d;">Light Probes</div>
<svg style="left:3395px;top:1154.0px;" width="15" height="8" viewBox="0 0 15 8"><path d="M0 0H15L7.5 8Z" fill="#8d8d8d"/></svg>
<svg style="left:2770px;top:1192px;" width="18" height="14" viewBox="0 0 18 14"><path d="M0 0H18L9.0 14Z" fill="#7a7a7a"/></svg>
<div class="t" style="left:2798px;top:1179px;font-size:24.5px;color:#d6d6d6;font-weight:bold;">Probes</div>
<div class="t" style="left:2827px;top:1218px;font-size:25.5px;color:#c4c4c4;width:210px;overflow:hidden;">Light Probes</div>
<div style="left:3040px;top:1223px;width:380px;height:32px;background:#515151;border-radius:5px;box-shadow:inset 0 0 0 1px #303030;"></div>
<div class="t" style="left:3048px;top:1219.0px;font-size:25.5px;color:#d2d2d2;">Blend Probes</div>
<svg style="left:3395px;top:1235.0px;" width="15" height="8" viewBox="0 0 15 8"><path d="M0 0H15L7.5 8Z" fill="#c4c4c4"/></svg>
<div class="t" style="left:2827px;top:1258px;font-size:25.5px;color:#c4c4c4;width:210px;overflow:hidden;">Anchor Override</div>
<div style="left:3039px;top:1261px;width:381px;height:34px;background:#2a2a2a;border-radius:6px;box-shadow:inset 0 0 0 1px #1f1f1f;"></div>
<div style="left:3383px;top:1262px;width:36px;height:32px;background:#2e2e2e;border-radius:0 6px 6px 0;"></div>
<div class="t" style="left:3045px;top:1258px;font-size:25.5px;color:#b8b8b8;">None (Transform)</div>
<svg style="left:3391px;top:1267px;" width="22" height="22" viewBox="0 0 22 22"><circle cx="11" cy="11" r="9" stroke="#c4c4c4" stroke-width="2.2" fill="none"/><circle cx="11" cy="11" r="3.6" fill="#c4c4c4"/></svg>
<svg style="left:2770px;top:1311px;" width="18" height="14" viewBox="0 0 18 14"><path d="M0 0H18L9.0 14Z" fill="#7a7a7a"/></svg>
<div class="t" style="left:2798px;top:1298px;font-size:24.5px;color:#d6d6d6;font-weight:bold;">Additional Settings</div>
<div class="t" style="left:2827px;top:1338px;font-size:25.5px;color:#c4c4c4;width:210px;overflow:hidden;">Motion Vectors</div>
<div style="left:3040px;top:1342px;width:380px;height:32px;background:#515151;border-radius:5px;box-shadow:inset 0 0 0 1px #303030;"></div>
<div class="t" style="left:3048px;top:1338.0px;font-size:25.5px;color:#d2d2d2;">Per Object Motion</div>
<svg style="left:3395px;top:1354.0px;" width="15" height="8" viewBox="0 0 15 8"><path d="M0 0H15L7.5 8Z" fill="#c4c4c4"/></svg>
<div class="t" style="left:2827px;top:1378px;font-size:25.5px;color:#c4c4c4;width:210px;overflow:hidden;">Dynamic Occlusion</div>
<svg style="left:3039px;top:1385px;" width="26" height="26" viewBox="0 0 26 26"><rect x="0.5" y="0.5" width="25" height="25" rx="4" fill="#2a2a2a" stroke="#1f1f1f"/><path d="M6.5 13.52L11.18 18.2L20.02 7.8" stroke="#e8e8e8" stroke-width="3" fill="none"/></svg>
<div class="t" style="left:2827px;top:1418px;font-size:25.5px;color:#c4c4c4;width:210px;overflow:hidden;">Rendering Layer Mask</div>
<div style="left:3040px;top:1423px;width:380px;height:31px;background:#515151;border-radius:5px;box-shadow:inset 0 0 0 1px #303030;"></div>
<div class="t" style="left:3048px;top:1418.5px;font-size:25.5px;color:#d2d2d2;">Default</div>
<svg style="left:3395px;top:1434.5px;" width="15" height="8" viewBox="0 0 15 8"><path d="M0 0H15L7.5 8Z" fill="#c4c4c4"/></svg>
<div style="left:2758px;top:1472px;width:672px;height:2px;background:#232323;"></div>
<div style="left:2790px;top:1486px;width:64px;height:64px;background:#505050;"></div>
<svg style="left:2792px;top:1488px;" width="60" height="60" viewBox="0 0 60 60"><defs><radialGradient id="sph" cx="0.35" cy="0.3" r="0.7"><stop offset="0" stop-color="#8a8a8a"/><stop offset="0.12" stop-color="#2a2a2a"/><stop offset="1" stop-color="#000"/></radialGradient></defs><circle cx="30" cy="32" r="28" fill="url(#sph)"/></svg>
<div class="t" style="left:2871px;top:1480px;font-size:27px;color:#c4c4c4;">black (Material)</div>
<svg style="left:3339px;top:1490px;" width="22" height="22" viewBox="0 0 22 22"><circle cx="11" cy="11" r="10.5" fill="#c4c4c4"/><path d="M7.5 8.5A3.5 3.5 0 1 1 12.2 11.8C11.3 12.2 11 12.8 11 13.8" stroke="#3e3e3e" stroke-width="2.6" fill="none"/><circle cx="11" cy="17" r="1.6" fill="#3e3e3e"/></svg>
<svg style="left:3372px;top:1490px;" width="22" height="22" viewBox="0 0 22 22"><path d="M0 7H22M0 15H22" stroke="#c4c4c4" stroke-width="2.2"/><rect x="12" y="2" width="3" height="9" fill="#c4c4c4"/><rect x="6" y="11" width="3" height="9" fill="#c4c4c4"/></svg>
<svg style="left:3410px;top:1488px;" width="8" height="24" viewBox="0 0 8 24"><circle cx="4" cy="4.5" r="2.8" fill="#c4c4c4"/><circle cx="4" cy="12" r="2.8" fill="#c4c4c4"/><circle cx="4" cy="19.5" r="2.8" fill="#c4c4c4"/></svg>
<svg style="left:2773px;top:1553px;" width="13" height="17" viewBox="0 0 13 17"><path d="M0 0V17L13 8.5Z" fill="#7a7a7a"/></svg>
<div class="t" style="left:2865px;top:1532px;font-size:25.5px;color:#c4c4c4;">Shader</div>
<div style="left:2967px;top:1536px;width:261px;height:33px;background:#515151;border-radius:5px;box-shadow:inset 0 0 0 1px #303030;"></div>
<div class="t" style="left:2975px;top:1532.5px;font-size:25.5px;color:#d2d2d2;">Universal Render Pi</div>
<svg style="left:3203px;top:1548.5px;" width="15" height="8" viewBox="0 0 15 8"><path d="M0 0H15L7.5 8Z" fill="#c4c4c4"/></svg>
<div style="left:3238px;top:1532px;width:88px;height:33px;background:#515151;border-radius:5px;box-shadow:inset 0 0 0 1px #303030;"></div>
<div class="t" style="left:3251px;top:1527px;font-size:25.5px;color:#d2d2d2;">Edit...</div>
<div style="left:3336px;top:1536px;width:84px;height:33px;background:#515151;border-radius:5px;box-shadow:inset 0 0 0 1px #303030;"></div>
<svg style="left:3353px;top:1544px;" width="22" height="17" viewBox="0 0 22 17"><circle cx="2.2" cy="2" r="2" fill="#c4c4c4"/><circle cx="6" cy="9" r="2" fill="#c4c4c4"/><circle cx="6" cy="15" r="2" fill="#c4c4c4"/><path d="M6 2H21M10 9H21M10 15H21" stroke="#c4c4c4" stroke-width="2.2"/></svg>
<svg style="left:3395px;top:1549px;" width="15" height="8" viewBox="0 0 15 8"><path d="M0 0H15L7.5 8Z" fill="#c4c4c4"/></svg>
<div style="left:2758px;top:1590px;width:672px;height:2px;background:#1f1f1f;"></div>
<div style="left:2758px;top:1592px;width:672px;height:19px;background:#363636;"></div>
<div style="left:2758px;top:1611px;width:672px;height:2px;background:#1f1f1f;"></div>
<div style="left:2790px;top:1623px;width:64px;height:4px;background:#505050;"></div>
<div style="left:2758px;top:1627px;width:698px;height:2px;background:#1f1f1f;"></div>
<div class="t" style="left:2773px;top:1630px;font-size:24.5px;color:#d6d6d6;font-weight:bold;">drone Black</div>
<div style="left:2921px;top:1647px;width:497px;height:2px;background:#6a6a6a;"></div>
<div style="left:2921px;top:1653px;width:497px;height:2px;background:#6a6a6a;"></div>
<div style="left:3422px;top:1629px;width:2px;height:42px;background:#1f1f1f;"></div>
<svg style="left:3437px;top:1638px;" width="8" height="24" viewBox="0 0 8 24"><circle cx="4" cy="4.5" r="2.8" fill="#c4c4c4"/><circle cx="4" cy="12" r="2.8" fill="#c4c4c4"/><circle cx="4" cy="19.5" r="2.8" fill="#c4c4c4"/></svg>
<div style="left:2758px;top:1669px;width:698px;height:2px;background:#1f1f1f;"></div>
<svg style="left:2948px;top:1780px;" width="310" height="150" viewBox="0 0 310 150">
<path d="M73 64L128 59M228 52L240 49M140 26L146 40M172 77L182 92" stroke="#0a0a0a" stroke-width="3.5"/>
<path d="M37 70V100M140 22V42M265 45V70M185 105V137" stroke="#0a0a0a" stroke-width="3.5"/>
<g stroke="#5fd85a" fill="none">
<ellipse cx="37" cy="66" rx="36" ry="12" stroke-width="3"/><ellipse cx="37" cy="65" rx="27" ry="8" stroke-width="2"/>
<ellipse cx="140" cy="18" rx="29" ry="8" stroke-width="2.6"/><ellipse cx="140" cy="18" rx="21" ry="5" stroke-width="1.8"/>
<ellipse cx="267" cy="39" rx="32" ry="10" stroke-width="2.8"/><ellipse cx="266" cy="38" rx="23" ry="6.5" stroke-width="2"/>
<ellipse cx="185" cy="98" rx="42" ry="15" stroke-width="3.2"/><ellipse cx="184" cy="97" rx="31" ry="10" stroke-width="2.2"/></g>
<g stroke="#161616" fill="none"><ellipse cx="37" cy="66" rx="32" ry="10" stroke-width="2"/><ellipse cx="140" cy="18" rx="25" ry="6.5" stroke-width="2"/><ellipse cx="267" cy="39" rx="28" ry="8" stroke-width="2"/><ellipse cx="185" cy="98" rx="37" ry="12.5" stroke-width="2"/></g>
<path d="M104 48L128 38.5L209 51.5L228 62.6L220.5 81L183.5 73.7L128 59Z" fill="#0c0c0c"/>
<path d="M185 55L205 60L215 72L195 68Z" fill="#4fc04a"/><path d="M160 50Q170 44 178 50" stroke="#e8e8e8" stroke-width="2" fill="none"/>
<path d="M25 72L48 60M128 18L152 17M255 40L272 34M168 103L200 92" stroke="#f0f0f0" stroke-width="3"/></svg>
<svg style="left:3408px;top:2027px;" width="39" height="32" viewBox="0 0 39 32"><rect x="0" y="0" width="39" height="32" rx="16" fill="#234a82"/><path d="M19 7H28V16L17 27L9 19Z" fill="#ffffff"/><circle cx="24" cy="11" r="1.8" fill="#234a82"/></svg>
<div class="t" style="left:2767px;top:2070px;font-size:25.5px;color:#c4c4c4;">AssetBundle</div>
<div style="left:2950px;top:2072px;width:362px;height:35px;background:#515151;border-radius:5px;box-shadow:inset 0 0 0 1px #303030;"></div>
<div class="t" style="left:2958px;top:2069.5px;font-size:25.5px;color:#d2d2d2;">None</div>
<svg style="left:3287px;top:2085.5px;" width="15" height="8" viewBox="0 0 15 8"><path d="M0 0H15L7.5 8Z" fill="#c4c4c4"/></svg>
<div style="left:3324px;top:2072px;width:132px;height:35px;background:#515151;border-radius:5px;box-shadow:inset 0 0 0 1px #303030;"></div>
<div class="t" style="left:3332px;top:2069.5px;font-size:25.5px;color:#d2d2d2;">None</div>
<svg style="left:3431px;top:2085.5px;" width="15" height="8" viewBox="0 0 15 8"><path d="M0 0H15L7.5 8Z" fill="#c4c4c4"/></svg>
</body></html>
